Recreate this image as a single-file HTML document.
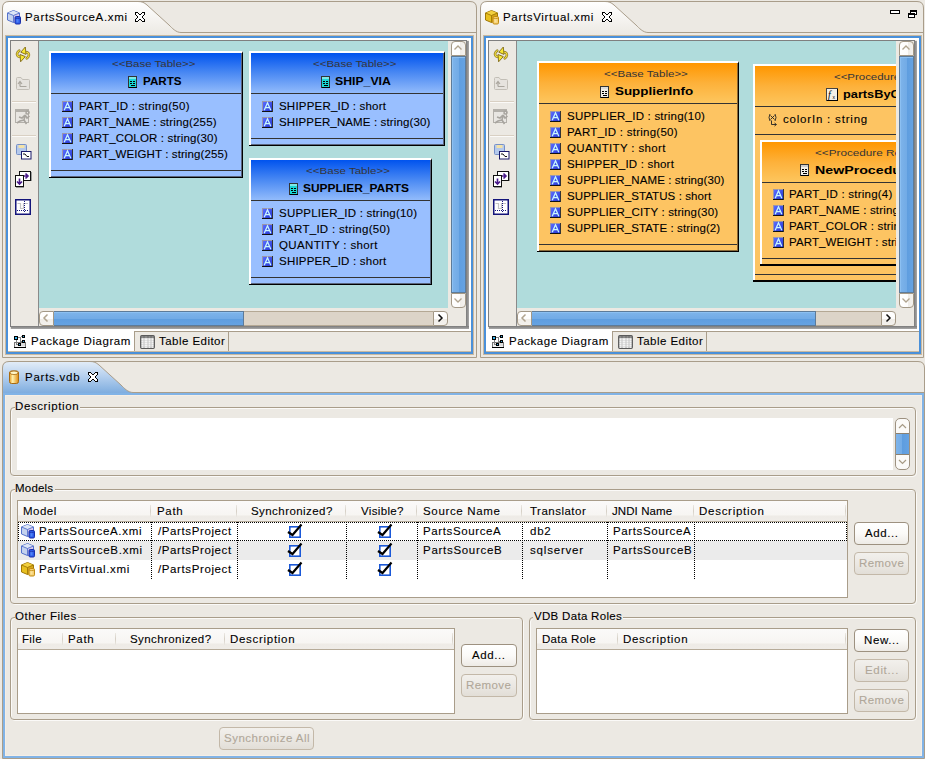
<!DOCTYPE html>
<html><head><meta charset='utf-8'><style>
html,body{margin:0;padding:0;}
body{width:925px;height:759px;overflow:hidden;position:relative;background:#ece9e3;font-family:"Liberation Sans", sans-serif;}
.t{position:absolute;white-space:pre;font-family:"Liberation Sans", sans-serif;}
.s{-webkit-text-stroke:0.1px currentColor;}
.r{position:absolute;box-sizing:border-box;}
svg.r{overflow:visible;}
</style></head><body>
<svg class='r' style='left:0;top:0' width='925' height='362'><defs><linearGradient id='tg2' x1='0' y1='0' x2='0' y2='1'><stop offset='0' stop-color='#ffffff'/><stop offset='1' stop-color='#ece9e3'/></linearGradient></defs><path d='M2.5,34 V8 Q2.5,1.5 9,1.5 H138 C142,1.5 144,2.5 147,5 L169,25 C172,28 176,32.5 181,32.5 V35 H2 Z' fill='url(#tg2)'/><path d='M2.5,357.5 V8 Q2.5,1.5 9,1.5 H470 Q476.5,1.5 476.5,8 V357.5 Z' fill='none' stroke='#a99d8a' stroke-width='1'/><path d='M138,1.5 C142,1.5 144,2.5 147,5 L169,25 C172,28 176,32.5 181,32.5 H476.5' fill='none' stroke='#a99d8a' stroke-width='1'/></svg>
<svg class='r' style='left:0;top:0' width='925' height='362'><defs><linearGradient id='tg480' x1='0' y1='0' x2='0' y2='1'><stop offset='0' stop-color='#ffffff'/><stop offset='1' stop-color='#ece9e3'/></linearGradient></defs><path d='M480.5,34 V8 Q480.5,1.5 487,1.5 H605 C609,1.5 611,2.5 614,5 L636,25 C639,28 643,32.5 648,32.5 V35 H480 Z' fill='url(#tg480)'/><path d='M480.5,357.5 V8 Q480.5,1.5 487,1.5 H917 Q923.5,1.5 923.5,8 V357.5 Z' fill='none' stroke='#a99d8a' stroke-width='1'/><path d='M605,1.5 C609,1.5 611,2.5 614,5 L636,25 C639,28 643,32.5 648,32.5 H923.5' fill='none' stroke='#a99d8a' stroke-width='1'/></svg>
<svg class='r' style='left:6px;top:9px;' width='17' height='17' viewBox='0 0 17 17'><path d='M1.5,4 L7.5,1.5 L13.5,4 V11 L7.5,13.5 L1.5,11 Z' fill='#c4d2ee' stroke='#5572cc' stroke-width='1'/><path d='M2,4 L7.5,1.8 L13,4 L7.5,6.3 Z' fill='#dde6f6'/><path d='M7.5,6.3 L13,4 V11 L7.5,13.2 Z' fill='#d8c8f0'/><path d='M1.5,4 L7.5,6.5 L13.5,4 M7.5,6.5 V13.5' fill='none' stroke='#5572cc' stroke-width='0.9'/><rect x='9' y='7.5' width='5.5' height='7.5' rx='1.2' fill='#2a5ae8' stroke='#1a2ea8' stroke-width='1'/><rect x='10.5' y='9.5' width='2' height='4' fill='#6aa0ff' opacity='0.6'/><path d='M9,9 Q11.75,10.3 14.5,9' fill='none' stroke='#1a2ea8' stroke-width='0.8'/></svg>
<div class='t s' style='left:25.0px;top:12px;font-size:11.5px;line-height:11.5px;font-weight:400;color:#000;letter-spacing:0.667px;'>PartsSourceA.xmi</div>
<svg class='r' style='left:135px;top:11.5px;' width='10' height='10' viewBox='0 0 10 10'><g shape-rendering='crispEdges'><rect x='1' y='1' width='1' height='1' fill='#fff'/><rect x='2' y='1' width='1' height='1' fill='#fff'/><rect x='7' y='1' width='1' height='1' fill='#fff'/><rect x='8' y='1' width='1' height='1' fill='#fff'/><rect x='1' y='2' width='1' height='1' fill='#fff'/><rect x='2' y='2' width='1' height='1' fill='#fff'/><rect x='3' y='2' width='1' height='1' fill='#fff'/><rect x='6' y='2' width='1' height='1' fill='#fff'/><rect x='7' y='2' width='1' height='1' fill='#fff'/><rect x='8' y='2' width='1' height='1' fill='#fff'/><rect x='2' y='3' width='1' height='1' fill='#fff'/><rect x='3' y='3' width='1' height='1' fill='#fff'/><rect x='4' y='3' width='1' height='1' fill='#fff'/><rect x='5' y='3' width='1' height='1' fill='#fff'/><rect x='6' y='3' width='1' height='1' fill='#fff'/><rect x='7' y='3' width='1' height='1' fill='#fff'/><rect x='3' y='4' width='1' height='1' fill='#fff'/><rect x='4' y='4' width='1' height='1' fill='#fff'/><rect x='5' y='4' width='1' height='1' fill='#fff'/><rect x='6' y='4' width='1' height='1' fill='#fff'/><rect x='3' y='5' width='1' height='1' fill='#fff'/><rect x='4' y='5' width='1' height='1' fill='#fff'/><rect x='5' y='5' width='1' height='1' fill='#fff'/><rect x='6' y='5' width='1' height='1' fill='#fff'/><rect x='2' y='6' width='1' height='1' fill='#fff'/><rect x='3' y='6' width='1' height='1' fill='#fff'/><rect x='4' y='6' width='1' height='1' fill='#fff'/><rect x='5' y='6' width='1' height='1' fill='#fff'/><rect x='6' y='6' width='1' height='1' fill='#fff'/><rect x='7' y='6' width='1' height='1' fill='#fff'/><rect x='1' y='7' width='1' height='1' fill='#fff'/><rect x='2' y='7' width='1' height='1' fill='#fff'/><rect x='3' y='7' width='1' height='1' fill='#fff'/><rect x='6' y='7' width='1' height='1' fill='#fff'/><rect x='7' y='7' width='1' height='1' fill='#fff'/><rect x='8' y='7' width='1' height='1' fill='#fff'/><rect x='1' y='8' width='1' height='1' fill='#fff'/><rect x='2' y='8' width='1' height='1' fill='#fff'/><rect x='7' y='8' width='1' height='1' fill='#fff'/><rect x='8' y='8' width='1' height='1' fill='#fff'/><rect x='0' y='0' width='1' height='1' fill='#000'/><rect x='1' y='0' width='1' height='1' fill='#000'/><rect x='2' y='0' width='1' height='1' fill='#000'/><rect x='7' y='0' width='1' height='1' fill='#000'/><rect x='8' y='0' width='1' height='1' fill='#000'/><rect x='9' y='0' width='1' height='1' fill='#000'/><rect x='0' y='1' width='1' height='1' fill='#000'/><rect x='3' y='1' width='1' height='1' fill='#000'/><rect x='6' y='1' width='1' height='1' fill='#000'/><rect x='9' y='1' width='1' height='1' fill='#000'/><rect x='0' y='2' width='1' height='1' fill='#000'/><rect x='4' y='2' width='1' height='1' fill='#000'/><rect x='5' y='2' width='1' height='1' fill='#000'/><rect x='9' y='2' width='1' height='1' fill='#000'/><rect x='1' y='3' width='1' height='1' fill='#000'/><rect x='8' y='3' width='1' height='1' fill='#000'/><rect x='2' y='4' width='1' height='1' fill='#000'/><rect x='7' y='4' width='1' height='1' fill='#000'/><rect x='2' y='5' width='1' height='1' fill='#000'/><rect x='7' y='5' width='1' height='1' fill='#000'/><rect x='1' y='6' width='1' height='1' fill='#000'/><rect x='8' y='6' width='1' height='1' fill='#000'/><rect x='0' y='7' width='1' height='1' fill='#000'/><rect x='4' y='7' width='1' height='1' fill='#000'/><rect x='5' y='7' width='1' height='1' fill='#000'/><rect x='9' y='7' width='1' height='1' fill='#000'/><rect x='0' y='8' width='1' height='1' fill='#000'/><rect x='3' y='8' width='1' height='1' fill='#000'/><rect x='6' y='8' width='1' height='1' fill='#000'/><rect x='9' y='8' width='1' height='1' fill='#000'/><rect x='0' y='9' width='1' height='1' fill='#000'/><rect x='1' y='9' width='1' height='1' fill='#000'/><rect x='2' y='9' width='1' height='1' fill='#000'/><rect x='7' y='9' width='1' height='1' fill='#000'/><rect x='8' y='9' width='1' height='1' fill='#000'/><rect x='9' y='9' width='1' height='1' fill='#000'/></g></svg>
<svg class='r' style='left:484px;top:9px;' width='17' height='17' viewBox='0 0 17 17'><path d='M1.5,4 L7.5,1.5 L13.5,4 V11 L7.5,13.5 L1.5,11 Z' fill='#e8c020' stroke='#a07808' stroke-width='1'/><path d='M2,4 L7.5,1.8 L13,4 L7.5,6.3 Z' fill='#f2d040'/><path d='M7.5,6.3 L13,4 V11 L7.5,13.2 Z' fill='#d8a818'/><path d='M1.5,4 L7.5,6.5 L13.5,4 M7.5,6.5 V13.5' fill='none' stroke='#a07808' stroke-width='0.9'/><rect x='9' y='7.5' width='5.5' height='7.5' rx='1.2' fill='#f6cf70' stroke='#c08a10' stroke-width='1'/><rect x='10.5' y='9.5' width='2' height='4' fill='#fff0b8' opacity='0.6'/><path d='M9,9 Q11.75,10.3 14.5,9' fill='none' stroke='#c08a10' stroke-width='0.8'/></svg>
<div class='t s' style='left:503.0px;top:12px;font-size:11.5px;line-height:11.5px;font-weight:400;color:#000;letter-spacing:0.667px;'>PartsVirtual.xmi</div>
<svg class='r' style='left:602px;top:11.5px;' width='10' height='10' viewBox='0 0 10 10'><g shape-rendering='crispEdges'><rect x='1' y='1' width='1' height='1' fill='#fff'/><rect x='2' y='1' width='1' height='1' fill='#fff'/><rect x='7' y='1' width='1' height='1' fill='#fff'/><rect x='8' y='1' width='1' height='1' fill='#fff'/><rect x='1' y='2' width='1' height='1' fill='#fff'/><rect x='2' y='2' width='1' height='1' fill='#fff'/><rect x='3' y='2' width='1' height='1' fill='#fff'/><rect x='6' y='2' width='1' height='1' fill='#fff'/><rect x='7' y='2' width='1' height='1' fill='#fff'/><rect x='8' y='2' width='1' height='1' fill='#fff'/><rect x='2' y='3' width='1' height='1' fill='#fff'/><rect x='3' y='3' width='1' height='1' fill='#fff'/><rect x='4' y='3' width='1' height='1' fill='#fff'/><rect x='5' y='3' width='1' height='1' fill='#fff'/><rect x='6' y='3' width='1' height='1' fill='#fff'/><rect x='7' y='3' width='1' height='1' fill='#fff'/><rect x='3' y='4' width='1' height='1' fill='#fff'/><rect x='4' y='4' width='1' height='1' fill='#fff'/><rect x='5' y='4' width='1' height='1' fill='#fff'/><rect x='6' y='4' width='1' height='1' fill='#fff'/><rect x='3' y='5' width='1' height='1' fill='#fff'/><rect x='4' y='5' width='1' height='1' fill='#fff'/><rect x='5' y='5' width='1' height='1' fill='#fff'/><rect x='6' y='5' width='1' height='1' fill='#fff'/><rect x='2' y='6' width='1' height='1' fill='#fff'/><rect x='3' y='6' width='1' height='1' fill='#fff'/><rect x='4' y='6' width='1' height='1' fill='#fff'/><rect x='5' y='6' width='1' height='1' fill='#fff'/><rect x='6' y='6' width='1' height='1' fill='#fff'/><rect x='7' y='6' width='1' height='1' fill='#fff'/><rect x='1' y='7' width='1' height='1' fill='#fff'/><rect x='2' y='7' width='1' height='1' fill='#fff'/><rect x='3' y='7' width='1' height='1' fill='#fff'/><rect x='6' y='7' width='1' height='1' fill='#fff'/><rect x='7' y='7' width='1' height='1' fill='#fff'/><rect x='8' y='7' width='1' height='1' fill='#fff'/><rect x='1' y='8' width='1' height='1' fill='#fff'/><rect x='2' y='8' width='1' height='1' fill='#fff'/><rect x='7' y='8' width='1' height='1' fill='#fff'/><rect x='8' y='8' width='1' height='1' fill='#fff'/><rect x='0' y='0' width='1' height='1' fill='#000'/><rect x='1' y='0' width='1' height='1' fill='#000'/><rect x='2' y='0' width='1' height='1' fill='#000'/><rect x='7' y='0' width='1' height='1' fill='#000'/><rect x='8' y='0' width='1' height='1' fill='#000'/><rect x='9' y='0' width='1' height='1' fill='#000'/><rect x='0' y='1' width='1' height='1' fill='#000'/><rect x='3' y='1' width='1' height='1' fill='#000'/><rect x='6' y='1' width='1' height='1' fill='#000'/><rect x='9' y='1' width='1' height='1' fill='#000'/><rect x='0' y='2' width='1' height='1' fill='#000'/><rect x='4' y='2' width='1' height='1' fill='#000'/><rect x='5' y='2' width='1' height='1' fill='#000'/><rect x='9' y='2' width='1' height='1' fill='#000'/><rect x='1' y='3' width='1' height='1' fill='#000'/><rect x='8' y='3' width='1' height='1' fill='#000'/><rect x='2' y='4' width='1' height='1' fill='#000'/><rect x='7' y='4' width='1' height='1' fill='#000'/><rect x='2' y='5' width='1' height='1' fill='#000'/><rect x='7' y='5' width='1' height='1' fill='#000'/><rect x='1' y='6' width='1' height='1' fill='#000'/><rect x='8' y='6' width='1' height='1' fill='#000'/><rect x='0' y='7' width='1' height='1' fill='#000'/><rect x='4' y='7' width='1' height='1' fill='#000'/><rect x='5' y='7' width='1' height='1' fill='#000'/><rect x='9' y='7' width='1' height='1' fill='#000'/><rect x='0' y='8' width='1' height='1' fill='#000'/><rect x='3' y='8' width='1' height='1' fill='#000'/><rect x='6' y='8' width='1' height='1' fill='#000'/><rect x='9' y='8' width='1' height='1' fill='#000'/><rect x='0' y='9' width='1' height='1' fill='#000'/><rect x='1' y='9' width='1' height='1' fill='#000'/><rect x='2' y='9' width='1' height='1' fill='#000'/><rect x='7' y='9' width='1' height='1' fill='#000'/><rect x='8' y='9' width='1' height='1' fill='#000'/><rect x='9' y='9' width='1' height='1' fill='#000'/></g></svg>
<div class='r' style='left:890px;top:10px;width:10px;height:4px;border:1px solid #000;background:#fff'></div>
<div class='r' style='left:910px;top:10px;width:7px;height:5px;border:1px solid #000;border-top-width:2px;background:#fff'></div>
<div class='r' style='left:908px;top:13px;width:7px;height:5px;border:1px solid #000;border-top-width:2px;background:#fff'></div>
<div class='r' style='left:5px;top:35px;width:469px;height:320px;border:1px solid #c9b9a0'></div>
<div class='r' style='left:6px;top:36px;width:467px;height:318px;border:2px solid #4a90d9;background:#fff'></div>
<div class='r' style='left:483px;top:35px;width:439px;height:320px;border:1px solid #c9b9a0'></div>
<div class='r' style='left:484px;top:36px;width:437px;height:318px;border:2px solid #4a90d9;background:#fff'></div>
<div class='r' style='left:10px;top:40px;width:459px;height:289px;background:#ece9e3'></div>
<div class='r' style='left:466px;top:41px;width:3px;height:288px;background:linear-gradient(90deg,#7a7a7a,#a8a8a8)'></div>
<div class='r' style='left:11px;top:326px;width:458px;height:3px;background:linear-gradient(180deg,#7a7a7a,#a8a8a8)'></div>
<div class='r' style='left:10px;top:40px;width:457px;height:1px;background:#7f7f7f'></div>
<div class='r' style='left:10px;top:40px;width:1px;height:287px;background:#7f7f7f'></div>
<div class='r' style='left:38px;top:41px;width:1px;height:285px;background:#8a8a8a'></div>
<div class='r' style='left:39px;top:41px;width:409px;height:267px;background:#b0dcdc'></div>
<div class='r' style='left:451px;top:41px;width:15px;height:15px;border:1px solid #a39886;background:linear-gradient(90deg,#fff 0,#fdfcfb 60%,#efece7 60%,#f4f2ee 100%);border-radius:4px 4px 0 0'></div>
<svg class='r' style='left:451px;top:41px;' width='15' height='15' viewBox='0 0 15 15'><path d='M3.5,8.5 L7,5 L10.5,8.5' fill='none' stroke='#b0a48f' stroke-width='1.3'/></svg>
<div class='r' style='left:451px;top:56px;width:15px;height:237px;background:linear-gradient(90deg,#7eb4ea 0,#72abe6 50%,#5e9ddf 50%,#65a2e2 100%);border:1px solid #5d7b99;box-shadow:inset 1px 1px 0 #8cc0f2'></div>
<div class='r' style='left:451px;top:293px;width:15px;height:15px;border:1px solid #a39886;background:linear-gradient(90deg,#fff 0,#fdfcfb 60%,#efece7 60%,#f4f2ee 100%);border-radius:0 0 4px 4px'></div>
<svg class='r' style='left:451px;top:293px;' width='15' height='15' viewBox='0 0 15 15'><path d='M3.5,5.5 L7,9 L10.5,5.5' fill='none' stroke='#b0a48f' stroke-width='1.3'/></svg>
<div class='r' style='left:39px;top:311px;width:15px;height:15px;border:1px solid #a39886;background:linear-gradient(180deg,#fff 0,#fdfcfb 55%,#efece7 55%,#f4f2ee 100%);border-radius:4px 0 0 4px'></div>
<svg class='r' style='left:39px;top:311px;' width='15' height='15' viewBox='0 0 15 15'><path d='M8.5,3.5 L5,7 L8.5,10.5' fill='none' stroke='#b0a48f' stroke-width='1.5'/></svg>
<div class='r' style='left:54px;top:311px;width:190px;height:15px;background:linear-gradient(180deg,#7eb4ea 0,#72abe6 50%,#5e9ddf 50%,#65a2e2 100%);border:1px solid #5d7b99;border-left:none;box-shadow:inset 0 1px 0 #8cc0f2'></div>
<div class='r' style='left:244px;top:311px;width:189px;height:15px;background:#dcd4c8;border-top:1px solid #b4a894;border-bottom:1px solid #b4a894'></div>
<div class='r' style='left:433px;top:311px;width:15px;height:15px;border:1px solid #a39886;background:linear-gradient(180deg,#fff 0,#fdfcfb 55%,#efece7 55%,#f4f2ee 100%);border-radius:0 4px 4px 0'></div>
<svg class='r' style='left:433px;top:311px;' width='15' height='15' viewBox='0 0 15 15'><path d='M5.5,3.5 L9,7 L5.5,10.5' fill='none' stroke='#111' stroke-width='1.5'/></svg>
<div class='r' style='left:488px;top:40px;width:429px;height:289px;background:#ece9e3'></div>
<div class='r' style='left:914px;top:41px;width:3px;height:288px;background:linear-gradient(90deg,#7a7a7a,#a8a8a8)'></div>
<div class='r' style='left:489px;top:326px;width:428px;height:3px;background:linear-gradient(180deg,#7a7a7a,#a8a8a8)'></div>
<div class='r' style='left:488px;top:40px;width:427px;height:1px;background:#7f7f7f'></div>
<div class='r' style='left:488px;top:40px;width:1px;height:287px;background:#7f7f7f'></div>
<div class='r' style='left:516px;top:41px;width:1px;height:285px;background:#8a8a8a'></div>
<div class='r' style='left:517px;top:41px;width:379px;height:267px;background:#b0dcdc'></div>
<div class='r' style='left:899px;top:41px;width:15px;height:15px;border:1px solid #a39886;background:linear-gradient(90deg,#fff 0,#fdfcfb 60%,#efece7 60%,#f4f2ee 100%);border-radius:4px 4px 0 0'></div>
<svg class='r' style='left:899px;top:41px;' width='15' height='15' viewBox='0 0 15 15'><path d='M3.5,8.5 L7,5 L10.5,8.5' fill='none' stroke='#b0a48f' stroke-width='1.3'/></svg>
<div class='r' style='left:899px;top:56px;width:15px;height:237px;background:linear-gradient(90deg,#7eb4ea 0,#72abe6 50%,#5e9ddf 50%,#65a2e2 100%);border:1px solid #5d7b99;box-shadow:inset 1px 1px 0 #8cc0f2'></div>
<div class='r' style='left:899px;top:293px;width:15px;height:15px;border:1px solid #a39886;background:linear-gradient(90deg,#fff 0,#fdfcfb 60%,#efece7 60%,#f4f2ee 100%);border-radius:0 0 4px 4px'></div>
<svg class='r' style='left:899px;top:293px;' width='15' height='15' viewBox='0 0 15 15'><path d='M3.5,5.5 L7,9 L10.5,5.5' fill='none' stroke='#b0a48f' stroke-width='1.3'/></svg>
<div class='r' style='left:517px;top:311px;width:15px;height:15px;border:1px solid #a39886;background:linear-gradient(180deg,#fff 0,#fdfcfb 55%,#efece7 55%,#f4f2ee 100%);border-radius:4px 0 0 4px'></div>
<svg class='r' style='left:517px;top:311px;' width='15' height='15' viewBox='0 0 15 15'><path d='M8.5,3.5 L5,7 L8.5,10.5' fill='none' stroke='#b0a48f' stroke-width='1.5'/></svg>
<div class='r' style='left:532px;top:311px;width:284px;height:15px;background:linear-gradient(180deg,#7eb4ea 0,#72abe6 50%,#5e9ddf 50%,#65a2e2 100%);border:1px solid #5d7b99;border-left:none;box-shadow:inset 0 1px 0 #8cc0f2'></div>
<div class='r' style='left:816px;top:311px;width:65px;height:15px;background:#dcd4c8;border-top:1px solid #b4a894;border-bottom:1px solid #b4a894'></div>
<div class='r' style='left:881px;top:311px;width:15px;height:15px;border:1px solid #a39886;background:linear-gradient(180deg,#fff 0,#fdfcfb 55%,#efece7 55%,#f4f2ee 100%);border-radius:0 4px 4px 0'></div>
<svg class='r' style='left:881px;top:311px;' width='15' height='15' viewBox='0 0 15 15'><path d='M5.5,3.5 L9,7 L5.5,10.5' fill='none' stroke='#111' stroke-width='1.5'/></svg>
<div class='r' style='left:8px;top:331px;width:463px;height:1px;background:#a99d8a'></div>
<div class='r' style='left:8px;top:332px;width:463px;height:19px;background:#ece9e3'></div>
<div class='r' style='left:8px;top:351px;width:463px;height:1px;background:#c9b9a0'></div>
<div class='r' style='left:8px;top:329px;width:126px;height:22px;background:#fff'></div>
<div class='r' style='left:134px;top:331px;width:1px;height:20px;background:#a99d8a'></div>
<div class='r' style='left:228px;top:331px;width:1px;height:20px;background:#a99d8a'></div>
<svg class='r' style='left:12px;top:333px;' width='16' height='16' viewBox='0 0 16 16'><g shape-rendering='crispEdges'><path d='M2.5,14.5 V9.5 H13.5 V14.5 Z' fill='#f2f2f2' stroke='#777'/><rect x='2' y='14' width='12' height='1' fill='#000'/><rect x='9' y='10' width='4' height='3' fill='#ddd'/><path d='M6,4.5 H8.5 V8.5 H10 M8.5,3.5 H10 M4.5,7 V11.5 H6' fill='none' stroke='#808080'/><rect x='2' y='3' width='4' height='4' fill='#000'/><rect x='3' y='4' width='2' height='2' fill='#38b0e8'/><rect x='10' y='2' width='3' height='3' fill='#000'/><rect x='11' y='3' width='1' height='1' fill='#38a8e0'/><rect x='10' y='7' width='3' height='3' fill='#000'/><rect x='11' y='8' width='1' height='1' fill='#38a8e0'/><rect x='6' y='10' width='3' height='3' fill='#000'/><rect x='7' y='11' width='1' height='1' fill='#38a8e0'/></g></svg>
<div class='t s' style='left:31.0px;top:336px;font-size:11.5px;line-height:11.5px;font-weight:400;color:#000;letter-spacing:0.571px;'>Package Diagram</div>
<svg class='r' style='left:140px;top:335px;' width='15' height='14' viewBox='0 0 15 14'><rect x='0.7' y='0.7' width='13.6' height='12.6' rx='1' fill='#c4c4c4' stroke='#5a5a5a' stroke-width='1.3'/><rect x='1' y='1' width='13' height='2' fill='#6a6a6a'/><rect x='1.5' y='1.5' width='2' height='1' fill='#aaa'/><rect x='1.5' y='3.5' width='2' height='1.3' fill='#fff'/><rect x='1.5' y='5.5' width='2' height='1.3' fill='#fff'/><rect x='1.5' y='7.5' width='2' height='1.3' fill='#fff'/><rect x='1.5' y='9.5' width='2' height='1.3' fill='#fff'/><rect x='1.5' y='11.5' width='2' height='1.3' fill='#fff'/><rect x='4.5' y='1.5' width='3' height='1' fill='#aaa'/><rect x='4.5' y='3.5' width='3' height='1.3' fill='#fff'/><rect x='4.5' y='5.5' width='3' height='1.3' fill='#fff'/><rect x='4.5' y='7.5' width='3' height='1.3' fill='#fff'/><rect x='4.5' y='9.5' width='3' height='1.3' fill='#fff'/><rect x='4.5' y='11.5' width='3' height='1.3' fill='#fff'/><rect x='8.5' y='1.5' width='2' height='1' fill='#aaa'/><rect x='8.5' y='3.5' width='2' height='1.3' fill='#fff'/><rect x='8.5' y='5.5' width='2' height='1.3' fill='#fff'/><rect x='8.5' y='7.5' width='2' height='1.3' fill='#fff'/><rect x='8.5' y='9.5' width='2' height='1.3' fill='#fff'/><rect x='8.5' y='11.5' width='2' height='1.3' fill='#fff'/><rect x='11.5' y='1.5' width='2' height='1' fill='#aaa'/><rect x='11.5' y='3.5' width='2' height='1.3' fill='#fff'/><rect x='11.5' y='5.5' width='2' height='1.3' fill='#fff'/><rect x='11.5' y='7.5' width='2' height='1.3' fill='#fff'/><rect x='11.5' y='9.5' width='2' height='1.3' fill='#fff'/><rect x='11.5' y='11.5' width='2' height='1.3' fill='#fff'/></svg>
<div class='t s' style='left:159.0px;top:336px;font-size:11.5px;line-height:11.5px;font-weight:400;color:#000;letter-spacing:0.455px;'>Table Editor</div>
<div class='r' style='left:486px;top:331px;width:433px;height:1px;background:#a99d8a'></div>
<div class='r' style='left:486px;top:332px;width:433px;height:19px;background:#ece9e3'></div>
<div class='r' style='left:486px;top:351px;width:433px;height:1px;background:#c9b9a0'></div>
<div class='r' style='left:486px;top:329px;width:126px;height:22px;background:#fff'></div>
<div class='r' style='left:612px;top:331px;width:1px;height:20px;background:#a99d8a'></div>
<div class='r' style='left:706px;top:331px;width:1px;height:20px;background:#a99d8a'></div>
<svg class='r' style='left:490px;top:333px;' width='16' height='16' viewBox='0 0 16 16'><g shape-rendering='crispEdges'><path d='M2.5,14.5 V9.5 H13.5 V14.5 Z' fill='#f2f2f2' stroke='#777'/><rect x='2' y='14' width='12' height='1' fill='#000'/><rect x='9' y='10' width='4' height='3' fill='#ddd'/><path d='M6,4.5 H8.5 V8.5 H10 M8.5,3.5 H10 M4.5,7 V11.5 H6' fill='none' stroke='#808080'/><rect x='2' y='3' width='4' height='4' fill='#000'/><rect x='3' y='4' width='2' height='2' fill='#38b0e8'/><rect x='10' y='2' width='3' height='3' fill='#000'/><rect x='11' y='3' width='1' height='1' fill='#38a8e0'/><rect x='10' y='7' width='3' height='3' fill='#000'/><rect x='11' y='8' width='1' height='1' fill='#38a8e0'/><rect x='6' y='10' width='3' height='3' fill='#000'/><rect x='7' y='11' width='1' height='1' fill='#38a8e0'/></g></svg>
<div class='t s' style='left:509.0px;top:336px;font-size:11.5px;line-height:11.5px;font-weight:400;color:#000;letter-spacing:0.571px;'>Package Diagram</div>
<svg class='r' style='left:618px;top:335px;' width='15' height='14' viewBox='0 0 15 14'><rect x='0.7' y='0.7' width='13.6' height='12.6' rx='1' fill='#c4c4c4' stroke='#5a5a5a' stroke-width='1.3'/><rect x='1' y='1' width='13' height='2' fill='#6a6a6a'/><rect x='1.5' y='1.5' width='2' height='1' fill='#aaa'/><rect x='1.5' y='3.5' width='2' height='1.3' fill='#fff'/><rect x='1.5' y='5.5' width='2' height='1.3' fill='#fff'/><rect x='1.5' y='7.5' width='2' height='1.3' fill='#fff'/><rect x='1.5' y='9.5' width='2' height='1.3' fill='#fff'/><rect x='1.5' y='11.5' width='2' height='1.3' fill='#fff'/><rect x='4.5' y='1.5' width='3' height='1' fill='#aaa'/><rect x='4.5' y='3.5' width='3' height='1.3' fill='#fff'/><rect x='4.5' y='5.5' width='3' height='1.3' fill='#fff'/><rect x='4.5' y='7.5' width='3' height='1.3' fill='#fff'/><rect x='4.5' y='9.5' width='3' height='1.3' fill='#fff'/><rect x='4.5' y='11.5' width='3' height='1.3' fill='#fff'/><rect x='8.5' y='1.5' width='2' height='1' fill='#aaa'/><rect x='8.5' y='3.5' width='2' height='1.3' fill='#fff'/><rect x='8.5' y='5.5' width='2' height='1.3' fill='#fff'/><rect x='8.5' y='7.5' width='2' height='1.3' fill='#fff'/><rect x='8.5' y='9.5' width='2' height='1.3' fill='#fff'/><rect x='8.5' y='11.5' width='2' height='1.3' fill='#fff'/><rect x='11.5' y='1.5' width='2' height='1' fill='#aaa'/><rect x='11.5' y='3.5' width='2' height='1.3' fill='#fff'/><rect x='11.5' y='5.5' width='2' height='1.3' fill='#fff'/><rect x='11.5' y='7.5' width='2' height='1.3' fill='#fff'/><rect x='11.5' y='9.5' width='2' height='1.3' fill='#fff'/><rect x='11.5' y='11.5' width='2' height='1.3' fill='#fff'/></svg>
<div class='t s' style='left:637.0px;top:336px;font-size:11.5px;line-height:11.5px;font-weight:400;color:#000;letter-spacing:0.455px;'>Table Editor</div>
<svg class='r' style='left:15px;top:46px;' width='16' height='17' viewBox='0 0 16 17'><g fill='none' stroke-linecap='round'><path d='M9.5,6.2 C13.5,5.5 15,8.5 13.2,11 L11.8,12.3' stroke='#8f7a22' stroke-width='2.6'/><path d='M6.5,10.8 C2.5,11.5 1,8.5 2.8,6 L4.2,4.7' stroke='#8f7a22' stroke-width='2.6'/><path d='M9.5,6.2 C13.5,5.5 15,8.5 13.2,11 L11.8,12.3' stroke='#f4e040' stroke-width='1.1'/><path d='M6.5,10.8 C2.5,11.5 1,8.5 2.8,6 L4.2,4.7' stroke='#f4e040' stroke-width='1.1'/></g><path d='M10.3,1 L5.8,6.2 L11,8.4 Z' fill='#f8e830' stroke='#806a18' stroke-width='0.9'/><path d='M5.6,15.8 L10.3,10.6 L5,8.5 Z' fill='#f8e830' stroke='#806a18' stroke-width='0.9'/></svg>
<svg class='r' style='left:16px;top:77px;' width='14' height='13' viewBox='0 0 14 13'><path d='M0.5,3.5 V1.5 Q0.5,0.5 1.5,0.5 H5 L6.5,2.5 H12.5 Q13.5,2.5 13.5,3.5 V11.5 Q13.5,12.5 12.5,12.5 H1.5 Q0.5,12.5 0.5,11.5 Z' fill='#e6e3de' stroke='#c2beb6'/><path d='M4,9.5 V5 M2,7 L4,4.5 L6,7 M4,9.5 H10.5' fill='none' stroke='#aaa69e' stroke-width='1.2'/></svg>
<div class='r' style='left:12px;top:101px;width:24px;height:1px;background:#d9d0c3'></div>
<div class='r' style='left:12px;top:102px;width:24px;height:1px;background:#fbfaf8'></div>
<svg class='r' style='left:15px;top:109px;' width='16' height='16' viewBox='0 0 16 16'><rect x='0.5' y='0.5' width='13' height='13' fill='#e8e6e2' stroke='#b3b0aa'/><rect x='1' y='1' width='12' height='2' fill='#b3b0aa'/><path d='M11,3.5 A1.5,1.5 0 1 1 11,3.6 M10,6 L7,9 L4,8 M10,6 L12,9 L14.5,7 M10,6 L9,11 L11.5,15 M9,11 L5,12 L2,14' fill='none' stroke='#a8a59f' stroke-width='1.6'/></svg>
<div class='r' style='left:12px;top:135px;width:24px;height:1px;background:#d9d0c3'></div>
<div class='r' style='left:12px;top:136px;width:24px;height:1px;background:#fbfaf8'></div>
<svg class='r' style='left:16px;top:144px;' width='16' height='16' viewBox='0 0 16 16'><rect x='0.5' y='0.5' width='10' height='10' rx='1' fill='#b4c9ec' stroke='#7590c8'/><rect x='2.5' y='1' width='6' height='3' fill='#f3e2a8'/><rect x='5.5' y='7.5' width='9.5' height='7.5' fill='#fff' stroke='#1a1a6a'/><path d='M7,10 H9 L11,12.5 H13' fill='none' stroke='#111' stroke-width='1'/></svg>
<svg class='r' style='left:15px;top:171px;' width='17' height='17' viewBox='0 0 17 17'><rect x='4.5' y='0.5' width='11' height='9' fill='#fff' stroke='#111'/><rect x='16' y='1' width='1' height='9' fill='#999'/><path d='M7.5,5 H12.5 M10.5,2.5 L13,5 L10.5,7.5' fill='none' stroke='#4a1a8a' stroke-width='1.6'/><rect x='0.5' y='4.5' width='8' height='11' fill='#fff' stroke='#111'/><rect x='1' y='16' width='8' height='1' fill='#999'/><path d='M4.5,7.5 V12.5 M2,10.5 L4.5,13 L7,10.5' fill='none' stroke='#4a1a8a' stroke-width='1.6'/></svg>
<svg class='r' style='left:15px;top:199px;' width='16' height='16' viewBox='0 0 16 16'><rect x='0.75' y='0.75' width='14.5' height='14.5' fill='#fff' stroke='#14147a' stroke-width='1.5'/><path d='M2.5,4.5 H5.5 V9.5 H8.5 V4.5 H13' fill='none' stroke='#c4c4c4' stroke-width='1.2'/><path d='M9.5,2 V14 M2,11.5 H14' fill='none' stroke='#14147a' stroke-width='1' stroke-dasharray='1,1'/></svg>
<svg class='r' style='left:493px;top:46px;' width='16' height='17' viewBox='0 0 16 17'><g fill='none' stroke-linecap='round'><path d='M9.5,6.2 C13.5,5.5 15,8.5 13.2,11 L11.8,12.3' stroke='#8f7a22' stroke-width='2.6'/><path d='M6.5,10.8 C2.5,11.5 1,8.5 2.8,6 L4.2,4.7' stroke='#8f7a22' stroke-width='2.6'/><path d='M9.5,6.2 C13.5,5.5 15,8.5 13.2,11 L11.8,12.3' stroke='#f4e040' stroke-width='1.1'/><path d='M6.5,10.8 C2.5,11.5 1,8.5 2.8,6 L4.2,4.7' stroke='#f4e040' stroke-width='1.1'/></g><path d='M10.3,1 L5.8,6.2 L11,8.4 Z' fill='#f8e830' stroke='#806a18' stroke-width='0.9'/><path d='M5.6,15.8 L10.3,10.6 L5,8.5 Z' fill='#f8e830' stroke='#806a18' stroke-width='0.9'/></svg>
<svg class='r' style='left:494px;top:77px;' width='14' height='13' viewBox='0 0 14 13'><path d='M0.5,3.5 V1.5 Q0.5,0.5 1.5,0.5 H5 L6.5,2.5 H12.5 Q13.5,2.5 13.5,3.5 V11.5 Q13.5,12.5 12.5,12.5 H1.5 Q0.5,12.5 0.5,11.5 Z' fill='#e6e3de' stroke='#c2beb6'/><path d='M4,9.5 V5 M2,7 L4,4.5 L6,7 M4,9.5 H10.5' fill='none' stroke='#aaa69e' stroke-width='1.2'/></svg>
<div class='r' style='left:490px;top:101px;width:24px;height:1px;background:#d9d0c3'></div>
<div class='r' style='left:490px;top:102px;width:24px;height:1px;background:#fbfaf8'></div>
<svg class='r' style='left:493px;top:109px;' width='16' height='16' viewBox='0 0 16 16'><rect x='0.5' y='0.5' width='13' height='13' fill='#e8e6e2' stroke='#b3b0aa'/><rect x='1' y='1' width='12' height='2' fill='#b3b0aa'/><path d='M11,3.5 A1.5,1.5 0 1 1 11,3.6 M10,6 L7,9 L4,8 M10,6 L12,9 L14.5,7 M10,6 L9,11 L11.5,15 M9,11 L5,12 L2,14' fill='none' stroke='#a8a59f' stroke-width='1.6'/></svg>
<div class='r' style='left:490px;top:135px;width:24px;height:1px;background:#d9d0c3'></div>
<div class='r' style='left:490px;top:136px;width:24px;height:1px;background:#fbfaf8'></div>
<svg class='r' style='left:494px;top:144px;' width='16' height='16' viewBox='0 0 16 16'><rect x='0.5' y='0.5' width='10' height='10' rx='1' fill='#b4c9ec' stroke='#7590c8'/><rect x='2.5' y='1' width='6' height='3' fill='#f3e2a8'/><rect x='5.5' y='7.5' width='9.5' height='7.5' fill='#fff' stroke='#1a1a6a'/><path d='M7,10 H9 L11,12.5 H13' fill='none' stroke='#111' stroke-width='1'/></svg>
<svg class='r' style='left:493px;top:171px;' width='17' height='17' viewBox='0 0 17 17'><rect x='4.5' y='0.5' width='11' height='9' fill='#fff' stroke='#111'/><rect x='16' y='1' width='1' height='9' fill='#999'/><path d='M7.5,5 H12.5 M10.5,2.5 L13,5 L10.5,7.5' fill='none' stroke='#4a1a8a' stroke-width='1.6'/><rect x='0.5' y='4.5' width='8' height='11' fill='#fff' stroke='#111'/><rect x='1' y='16' width='8' height='1' fill='#999'/><path d='M4.5,7.5 V12.5 M2,10.5 L4.5,13 L7,10.5' fill='none' stroke='#4a1a8a' stroke-width='1.6'/></svg>
<svg class='r' style='left:493px;top:199px;' width='16' height='16' viewBox='0 0 16 16'><rect x='0.75' y='0.75' width='14.5' height='14.5' fill='#fff' stroke='#14147a' stroke-width='1.5'/><path d='M2.5,4.5 H5.5 V9.5 H8.5 V4.5 H13' fill='none' stroke='#c4c4c4' stroke-width='1.2'/><path d='M9.5,2 V14 M2,11.5 H14' fill='none' stroke='#14147a' stroke-width='1' stroke-dasharray='1,1'/></svg>
<div class='r' style='left:49px;top:51px;width:194px;height:127px;background:#99bfff;border-left:2px solid #fff;border-top:2px solid #fff;border-right:1px solid #000;border-bottom:1px solid #000'></div>
<div class='r' style='left:241px;top:53px;width:1px;height:124px;background:rgba(40,30,20,0.55)'></div>
<div class='r' style='left:51px;top:176px;width:190px;height:1px;background:rgba(40,30,20,0.55)'></div>
<div class='r' style='left:49px;top:177px;width:194px;height:1px;background:#000'></div>
<div class='r' style='left:51px;top:53px;width:190px;height:40px;background:linear-gradient(180deg,#0053ee 0%,#4a89f3 50%,#92bbfb 100%)'></div>
<div class='r' style='left:51px;top:93px;width:190px;height:1px;background:#333'></div>
<div class='r' style='left:51px;top:170px;width:190px;height:1px;background:#333'></div>
<div class='t' style='left:112.29px;top:59px;font-size:9.5px;line-height:9.5px;font-weight:400;color:#343438;letter-spacing:0px;transform:scaleX(1.2090);transform-origin:0 0;'>&lt;&lt;Base Table&gt;&gt;</div>
<svg class='r' style='left:128px;top:76px;' width='9' height='12' viewBox='0 0 9 12'><rect x='0.5' y='0.5' width='8' height='11' fill='#19d6d6' stroke='#333'/><rect x='1' y='1' width='7' height='2' fill='#7de8e8'/><rect x='1' y='11' width='8' height='1' fill='#000'/><rect x='2' y='5' width='2' height='1' fill='#000'/><rect x='5' y='5' width='2' height='1' fill='#000'/><rect x='2' y='7' width='2' height='1' fill='#000'/><rect x='5' y='7' width='2' height='1' fill='#000'/><rect x='3' y='9' width='4' height='1' fill='#000'/></svg>
<div class='t' style='left:142.94px;top:76px;font-size:11px;line-height:11px;font-weight:700;color:#000;letter-spacing:0px;transform:scaleX(1.0571);transform-origin:0 0;'>PARTS</div>
<svg class='r' style='left:62px;top:101px;' width='11' height='11' viewBox='0 0 11 11'><rect x='0' y='0' width='11' height='11' fill='#9a96aa'/><rect x='0' y='10' width='11' height='1' fill='#111'/><rect x='10' y='0' width='1' height='11' fill='#333'/><defs><linearGradient id='ag' x1='0' y1='0' x2='1' y2='1'><stop offset='0' stop-color='#5a6cff'/><stop offset='1' stop-color='#2436d0'/></linearGradient></defs><rect x='1' y='1' width='9' height='9' fill='url(#ag)'/><path d='M2.2,9.2 L5.5,1.8 L8.8,9.2 M3.6,6.6 H7.4' stroke='#c8f6ff' stroke-width='1.3' fill='none'/></svg>
<div class='t s' style='left:79.0px;top:101px;font-size:11.5px;line-height:11.5px;font-weight:400;color:#000;letter-spacing:0.253px;'>PART_ID : string(50)</div>
<svg class='r' style='left:62px;top:117px;' width='11' height='11' viewBox='0 0 11 11'><rect x='0' y='0' width='11' height='11' fill='#9a96aa'/><rect x='0' y='10' width='11' height='1' fill='#111'/><rect x='10' y='0' width='1' height='11' fill='#333'/><defs><linearGradient id='ag' x1='0' y1='0' x2='1' y2='1'><stop offset='0' stop-color='#5a6cff'/><stop offset='1' stop-color='#2436d0'/></linearGradient></defs><rect x='1' y='1' width='9' height='9' fill='url(#ag)'/><path d='M2.2,9.2 L5.5,1.8 L8.8,9.2 M3.6,6.6 H7.4' stroke='#c8f6ff' stroke-width='1.3' fill='none'/></svg>
<div class='t s' style='left:79.0px;top:117px;font-size:11.5px;line-height:11.5px;font-weight:400;color:#000;letter-spacing:0.173px;'>PART_NAME : string(255)</div>
<svg class='r' style='left:62px;top:133px;' width='11' height='11' viewBox='0 0 11 11'><rect x='0' y='0' width='11' height='11' fill='#9a96aa'/><rect x='0' y='10' width='11' height='1' fill='#111'/><rect x='10' y='0' width='1' height='11' fill='#333'/><defs><linearGradient id='ag' x1='0' y1='0' x2='1' y2='1'><stop offset='0' stop-color='#5a6cff'/><stop offset='1' stop-color='#2436d0'/></linearGradient></defs><rect x='1' y='1' width='9' height='9' fill='url(#ag)'/><path d='M2.2,9.2 L5.5,1.8 L8.8,9.2 M3.6,6.6 H7.4' stroke='#c8f6ff' stroke-width='1.3' fill='none'/></svg>
<div class='t s' style='left:79.0px;top:133px;font-size:11.5px;line-height:11.5px;font-weight:400;color:#000;letter-spacing:0.155px;'>PART_COLOR : string(30)</div>
<svg class='r' style='left:62px;top:149px;' width='11' height='11' viewBox='0 0 11 11'><rect x='0' y='0' width='11' height='11' fill='#9a96aa'/><rect x='0' y='10' width='11' height='1' fill='#111'/><rect x='10' y='0' width='1' height='11' fill='#333'/><defs><linearGradient id='ag' x1='0' y1='0' x2='1' y2='1'><stop offset='0' stop-color='#5a6cff'/><stop offset='1' stop-color='#2436d0'/></linearGradient></defs><rect x='1' y='1' width='9' height='9' fill='url(#ag)'/><path d='M2.2,9.2 L5.5,1.8 L8.8,9.2 M3.6,6.6 H7.4' stroke='#c8f6ff' stroke-width='1.3' fill='none'/></svg>
<div class='t s' style='left:79.0px;top:149px;font-size:11.5px;line-height:11.5px;font-weight:400;color:#000;letter-spacing:0.1px;'>PART_WEIGHT : string(255)</div>
<div class='r' style='left:249px;top:51px;width:196px;height:95px;background:#99bfff;border-left:2px solid #fff;border-top:2px solid #fff;border-right:1px solid #000;border-bottom:1px solid #000'></div>
<div class='r' style='left:443px;top:53px;width:1px;height:92px;background:rgba(40,30,20,0.55)'></div>
<div class='r' style='left:251px;top:144px;width:192px;height:1px;background:rgba(40,30,20,0.55)'></div>
<div class='r' style='left:249px;top:145px;width:196px;height:1px;background:#000'></div>
<div class='r' style='left:251px;top:53px;width:192px;height:40px;background:linear-gradient(180deg,#0053ee 0%,#4a89f3 50%,#92bbfb 100%)'></div>
<div class='r' style='left:251px;top:93px;width:192px;height:1px;background:#333'></div>
<div class='r' style='left:251px;top:138px;width:192px;height:1px;background:#333'></div>
<div class='t' style='left:313.29px;top:59px;font-size:9.5px;line-height:9.5px;font-weight:400;color:#343438;letter-spacing:0px;transform:scaleX(1.2090);transform-origin:0 0;'>&lt;&lt;Base Table&gt;&gt;</div>
<svg class='r' style='left:321px;top:76px;' width='9' height='12' viewBox='0 0 9 12'><rect x='0.5' y='0.5' width='8' height='11' fill='#19d6d6' stroke='#333'/><rect x='1' y='1' width='7' height='2' fill='#7de8e8'/><rect x='1' y='11' width='8' height='1' fill='#000'/><rect x='2' y='5' width='2' height='1' fill='#000'/><rect x='5' y='5' width='2' height='1' fill='#000'/><rect x='2' y='7' width='2' height='1' fill='#000'/><rect x='5' y='7' width='2' height='1' fill='#000'/><rect x='3' y='9' width='4' height='1' fill='#000'/></svg>
<div class='t' style='left:334.89px;top:76px;font-size:11px;line-height:11px;font-weight:700;color:#000;letter-spacing:0px;transform:scaleX(1.1143);transform-origin:0 0;'>SHIP_VIA</div>
<svg class='r' style='left:262px;top:101px;' width='11' height='11' viewBox='0 0 11 11'><rect x='0' y='0' width='11' height='11' fill='#9a96aa'/><rect x='0' y='10' width='11' height='1' fill='#111'/><rect x='10' y='0' width='1' height='11' fill='#333'/><defs><linearGradient id='ag' x1='0' y1='0' x2='1' y2='1'><stop offset='0' stop-color='#5a6cff'/><stop offset='1' stop-color='#2436d0'/></linearGradient></defs><rect x='1' y='1' width='9' height='9' fill='url(#ag)'/><path d='M2.2,9.2 L5.5,1.8 L8.8,9.2 M3.6,6.6 H7.4' stroke='#c8f6ff' stroke-width='1.3' fill='none'/></svg>
<div class='t s' style='left:279.0px;top:101px;font-size:11.5px;line-height:11.5px;font-weight:400;color:#000;letter-spacing:0.2px;'>SHIPPER_ID : short</div>
<svg class='r' style='left:262px;top:117px;' width='11' height='11' viewBox='0 0 11 11'><rect x='0' y='0' width='11' height='11' fill='#9a96aa'/><rect x='0' y='10' width='11' height='1' fill='#111'/><rect x='10' y='0' width='1' height='11' fill='#333'/><defs><linearGradient id='ag' x1='0' y1='0' x2='1' y2='1'><stop offset='0' stop-color='#5a6cff'/><stop offset='1' stop-color='#2436d0'/></linearGradient></defs><rect x='1' y='1' width='9' height='9' fill='url(#ag)'/><path d='M2.2,9.2 L5.5,1.8 L8.8,9.2 M3.6,6.6 H7.4' stroke='#c8f6ff' stroke-width='1.3' fill='none'/></svg>
<div class='t s' style='left:279.0px;top:117px;font-size:11.5px;line-height:11.5px;font-weight:400;color:#000;letter-spacing:0.125px;'>SHIPPER_NAME : string(30)</div>
<div class='r' style='left:249px;top:158px;width:183px;height:127px;background:#99bfff;border-left:2px solid #fff;border-top:2px solid #fff;border-right:1px solid #000;border-bottom:1px solid #000'></div>
<div class='r' style='left:430px;top:160px;width:1px;height:124px;background:rgba(40,30,20,0.55)'></div>
<div class='r' style='left:251px;top:283px;width:179px;height:1px;background:rgba(40,30,20,0.55)'></div>
<div class='r' style='left:249px;top:284px;width:183px;height:1px;background:#000'></div>
<div class='r' style='left:251px;top:160px;width:179px;height:40px;background:linear-gradient(180deg,#0053ee 0%,#4a89f3 50%,#92bbfb 100%)'></div>
<div class='r' style='left:251px;top:200px;width:179px;height:1px;background:#333'></div>
<div class='r' style='left:251px;top:277px;width:179px;height:1px;background:#333'></div>
<div class='t' style='left:306.28px;top:166px;font-size:9.5px;line-height:9.5px;font-weight:400;color:#343438;letter-spacing:0px;transform:scaleX(1.2179);transform-origin:0 0;'>&lt;&lt;Base Table&gt;&gt;</div>
<svg class='r' style='left:289px;top:183px;' width='9' height='12' viewBox='0 0 9 12'><rect x='0.5' y='0.5' width='8' height='11' fill='#19d6d6' stroke='#333'/><rect x='1' y='1' width='7' height='2' fill='#7de8e8'/><rect x='1' y='11' width='8' height='1' fill='#000'/><rect x='2' y='5' width='2' height='1' fill='#000'/><rect x='5' y='5' width='2' height='1' fill='#000'/><rect x='2' y='7' width='2' height='1' fill='#000'/><rect x='5' y='7' width='2' height='1' fill='#000'/><rect x='3' y='9' width='4' height='1' fill='#000'/></svg>
<div class='t' style='left:302.91px;top:183px;font-size:11px;line-height:11px;font-weight:700;color:#000;letter-spacing:0px;transform:scaleX(1.0865);transform-origin:0 0;'>SUPPLIER_PARTS</div>
<svg class='r' style='left:262px;top:208px;' width='11' height='11' viewBox='0 0 11 11'><rect x='0' y='0' width='11' height='11' fill='#9a96aa'/><rect x='0' y='10' width='11' height='1' fill='#111'/><rect x='10' y='0' width='1' height='11' fill='#333'/><defs><linearGradient id='ag' x1='0' y1='0' x2='1' y2='1'><stop offset='0' stop-color='#5a6cff'/><stop offset='1' stop-color='#2436d0'/></linearGradient></defs><rect x='1' y='1' width='9' height='9' fill='url(#ag)'/><path d='M2.2,9.2 L5.5,1.8 L8.8,9.2 M3.6,6.6 H7.4' stroke='#c8f6ff' stroke-width='1.3' fill='none'/></svg>
<div class='t s' style='left:279.0px;top:208px;font-size:11.5px;line-height:11.5px;font-weight:400;color:#000;letter-spacing:0.222px;'>SUPPLIER_ID : string(10)</div>
<svg class='r' style='left:262px;top:224px;' width='11' height='11' viewBox='0 0 11 11'><rect x='0' y='0' width='11' height='11' fill='#9a96aa'/><rect x='0' y='10' width='11' height='1' fill='#111'/><rect x='10' y='0' width='1' height='11' fill='#333'/><defs><linearGradient id='ag' x1='0' y1='0' x2='1' y2='1'><stop offset='0' stop-color='#5a6cff'/><stop offset='1' stop-color='#2436d0'/></linearGradient></defs><rect x='1' y='1' width='9' height='9' fill='url(#ag)'/><path d='M2.2,9.2 L5.5,1.8 L8.8,9.2 M3.6,6.6 H7.4' stroke='#c8f6ff' stroke-width='1.3' fill='none'/></svg>
<div class='t s' style='left:279.0px;top:224px;font-size:11.5px;line-height:11.5px;font-weight:400;color:#000;letter-spacing:0.279px;'>PART_ID : string(50)</div>
<svg class='r' style='left:262px;top:240px;' width='11' height='11' viewBox='0 0 11 11'><rect x='0' y='0' width='11' height='11' fill='#9a96aa'/><rect x='0' y='10' width='11' height='1' fill='#111'/><rect x='10' y='0' width='1' height='11' fill='#333'/><defs><linearGradient id='ag' x1='0' y1='0' x2='1' y2='1'><stop offset='0' stop-color='#5a6cff'/><stop offset='1' stop-color='#2436d0'/></linearGradient></defs><rect x='1' y='1' width='9' height='9' fill='url(#ag)'/><path d='M2.2,9.2 L5.5,1.8 L8.8,9.2 M3.6,6.6 H7.4' stroke='#c8f6ff' stroke-width='1.3' fill='none'/></svg>
<div class='t s' style='left:279.0px;top:240px;font-size:11.5px;line-height:11.5px;font-weight:400;color:#000;letter-spacing:0.36px;'>QUANTITY : short</div>
<svg class='r' style='left:262px;top:256px;' width='11' height='11' viewBox='0 0 11 11'><rect x='0' y='0' width='11' height='11' fill='#9a96aa'/><rect x='0' y='10' width='11' height='1' fill='#111'/><rect x='10' y='0' width='1' height='11' fill='#333'/><defs><linearGradient id='ag' x1='0' y1='0' x2='1' y2='1'><stop offset='0' stop-color='#5a6cff'/><stop offset='1' stop-color='#2436d0'/></linearGradient></defs><rect x='1' y='1' width='9' height='9' fill='url(#ag)'/><path d='M2.2,9.2 L5.5,1.8 L8.8,9.2 M3.6,6.6 H7.4' stroke='#c8f6ff' stroke-width='1.3' fill='none'/></svg>
<div class='t s' style='left:279.0px;top:256px;font-size:11.5px;line-height:11.5px;font-weight:400;color:#000;letter-spacing:0.218px;'>SHIPPER_ID : short</div>
<div class='r' style='left:537px;top:61px;width:202px;height:191px;background:#fdc462;border-left:2px solid #fff;border-top:2px solid #fff;border-right:1px solid #000;border-bottom:1px solid #000'></div>
<div class='r' style='left:737px;top:63px;width:1px;height:188px;background:rgba(40,30,20,0.55)'></div>
<div class='r' style='left:539px;top:250px;width:198px;height:1px;background:rgba(40,30,20,0.55)'></div>
<div class='r' style='left:537px;top:251px;width:202px;height:1px;background:#000'></div>
<div class='r' style='left:539px;top:63px;width:198px;height:40px;background:linear-gradient(180deg,#ff9700 0%,#fdb13a 50%,#fdc65e 100%)'></div>
<div class='r' style='left:539px;top:103px;width:198px;height:1px;background:#333'></div>
<div class='r' style='left:539px;top:244px;width:198px;height:1px;background:#333'></div>
<div class='t' style='left:604.29px;top:69px;font-size:9.5px;line-height:9.5px;font-weight:400;color:#343438;letter-spacing:0px;transform:scaleX(1.2149);transform-origin:0 0;'>&lt;&lt;Base Table&gt;&gt;</div>
<svg class='r' style='left:600px;top:86px;' width='9' height='12' viewBox='0 0 9 12'><rect x='0.5' y='0.5' width='8' height='11' fill='#f2efe8' stroke='#333'/><rect x='1' y='1' width='7' height='2' fill='#ddd'/><rect x='1' y='11' width='8' height='1' fill='#000'/><rect x='2' y='5' width='2' height='1' fill='#000'/><rect x='5' y='5' width='2' height='1' fill='#000'/><rect x='2' y='7' width='2' height='1' fill='#000'/><rect x='5' y='7' width='2' height='1' fill='#000'/><rect x='3' y='9' width='4' height='1' fill='#000'/></svg>
<div class='t' style='left:614.78px;top:86px;font-size:11px;line-height:11px;font-weight:700;color:#000;letter-spacing:0px;transform:scaleX(1.2175);transform-origin:0 0;'>SupplierInfo</div>
<svg class='r' style='left:550px;top:111px;' width='11' height='11' viewBox='0 0 11 11'><rect x='0' y='0' width='11' height='11' fill='#9a96aa'/><rect x='0' y='10' width='11' height='1' fill='#111'/><rect x='10' y='0' width='1' height='11' fill='#333'/><defs><linearGradient id='ag' x1='0' y1='0' x2='1' y2='1'><stop offset='0' stop-color='#5a6cff'/><stop offset='1' stop-color='#2436d0'/></linearGradient></defs><rect x='1' y='1' width='9' height='9' fill='url(#ag)'/><path d='M2.2,9.2 L5.5,1.8 L8.8,9.2 M3.6,6.6 H7.4' stroke='#c8f6ff' stroke-width='1.3' fill='none'/></svg>
<div class='t s' style='left:567.0px;top:111px;font-size:11.5px;line-height:11.5px;font-weight:400;color:#000;letter-spacing:0.217px;'>SUPPLIER_ID : string(10)</div>
<svg class='r' style='left:550px;top:127px;' width='11' height='11' viewBox='0 0 11 11'><rect x='0' y='0' width='11' height='11' fill='#9a96aa'/><rect x='0' y='10' width='11' height='1' fill='#111'/><rect x='10' y='0' width='1' height='11' fill='#333'/><defs><linearGradient id='ag' x1='0' y1='0' x2='1' y2='1'><stop offset='0' stop-color='#5a6cff'/><stop offset='1' stop-color='#2436d0'/></linearGradient></defs><rect x='1' y='1' width='9' height='9' fill='url(#ag)'/><path d='M2.2,9.2 L5.5,1.8 L8.8,9.2 M3.6,6.6 H7.4' stroke='#c8f6ff' stroke-width='1.3' fill='none'/></svg>
<div class='t s' style='left:567.0px;top:127px;font-size:11.5px;line-height:11.5px;font-weight:400;color:#000;letter-spacing:0.258px;'>PART_ID : string(50)</div>
<svg class='r' style='left:550px;top:143px;' width='11' height='11' viewBox='0 0 11 11'><rect x='0' y='0' width='11' height='11' fill='#9a96aa'/><rect x='0' y='10' width='11' height='1' fill='#111'/><rect x='10' y='0' width='1' height='11' fill='#333'/><defs><linearGradient id='ag' x1='0' y1='0' x2='1' y2='1'><stop offset='0' stop-color='#5a6cff'/><stop offset='1' stop-color='#2436d0'/></linearGradient></defs><rect x='1' y='1' width='9' height='9' fill='url(#ag)'/><path d='M2.2,9.2 L5.5,1.8 L8.8,9.2 M3.6,6.6 H7.4' stroke='#c8f6ff' stroke-width='1.3' fill='none'/></svg>
<div class='t s' style='left:567.0px;top:143px;font-size:11.5px;line-height:11.5px;font-weight:400;color:#000;letter-spacing:0.353px;'>QUANTITY : short</div>
<svg class='r' style='left:550px;top:159px;' width='11' height='11' viewBox='0 0 11 11'><rect x='0' y='0' width='11' height='11' fill='#9a96aa'/><rect x='0' y='10' width='11' height='1' fill='#111'/><rect x='10' y='0' width='1' height='11' fill='#333'/><defs><linearGradient id='ag' x1='0' y1='0' x2='1' y2='1'><stop offset='0' stop-color='#5a6cff'/><stop offset='1' stop-color='#2436d0'/></linearGradient></defs><rect x='1' y='1' width='9' height='9' fill='url(#ag)'/><path d='M2.2,9.2 L5.5,1.8 L8.8,9.2 M3.6,6.6 H7.4' stroke='#c8f6ff' stroke-width='1.3' fill='none'/></svg>
<div class='t s' style='left:567.0px;top:159px;font-size:11.5px;line-height:11.5px;font-weight:400;color:#000;letter-spacing:0.194px;'>SHIPPER_ID : short</div>
<svg class='r' style='left:550px;top:175px;' width='11' height='11' viewBox='0 0 11 11'><rect x='0' y='0' width='11' height='11' fill='#9a96aa'/><rect x='0' y='10' width='11' height='1' fill='#111'/><rect x='10' y='0' width='1' height='11' fill='#333'/><defs><linearGradient id='ag' x1='0' y1='0' x2='1' y2='1'><stop offset='0' stop-color='#5a6cff'/><stop offset='1' stop-color='#2436d0'/></linearGradient></defs><rect x='1' y='1' width='9' height='9' fill='url(#ag)'/><path d='M2.2,9.2 L5.5,1.8 L8.8,9.2 M3.6,6.6 H7.4' stroke='#c8f6ff' stroke-width='1.3' fill='none'/></svg>
<div class='t s' style='left:567.0px;top:175px;font-size:11.5px;line-height:11.5px;font-weight:400;color:#000;letter-spacing:0.108px;'>SUPPLIER_NAME : string(30)</div>
<svg class='r' style='left:550px;top:191px;' width='11' height='11' viewBox='0 0 11 11'><rect x='0' y='0' width='11' height='11' fill='#9a96aa'/><rect x='0' y='10' width='11' height='1' fill='#111'/><rect x='10' y='0' width='1' height='11' fill='#333'/><defs><linearGradient id='ag' x1='0' y1='0' x2='1' y2='1'><stop offset='0' stop-color='#5a6cff'/><stop offset='1' stop-color='#2436d0'/></linearGradient></defs><rect x='1' y='1' width='9' height='9' fill='url(#ag)'/><path d='M2.2,9.2 L5.5,1.8 L8.8,9.2 M3.6,6.6 H7.4' stroke='#c8f6ff' stroke-width='1.3' fill='none'/></svg>
<div class='t s' style='left:567.0px;top:191px;font-size:11.5px;line-height:11.5px;font-weight:400;color:#000;letter-spacing:0.095px;'>SUPPLIER_STATUS : short</div>
<svg class='r' style='left:550px;top:207px;' width='11' height='11' viewBox='0 0 11 11'><rect x='0' y='0' width='11' height='11' fill='#9a96aa'/><rect x='0' y='10' width='11' height='1' fill='#111'/><rect x='10' y='0' width='1' height='11' fill='#333'/><defs><linearGradient id='ag' x1='0' y1='0' x2='1' y2='1'><stop offset='0' stop-color='#5a6cff'/><stop offset='1' stop-color='#2436d0'/></linearGradient></defs><rect x='1' y='1' width='9' height='9' fill='url(#ag)'/><path d='M2.2,9.2 L5.5,1.8 L8.8,9.2 M3.6,6.6 H7.4' stroke='#c8f6ff' stroke-width='1.3' fill='none'/></svg>
<div class='t s' style='left:567.0px;top:207px;font-size:11.5px;line-height:11.5px;font-weight:400;color:#000;letter-spacing:0.144px;'>SUPPLIER_CITY : string(30)</div>
<svg class='r' style='left:550px;top:223px;' width='11' height='11' viewBox='0 0 11 11'><rect x='0' y='0' width='11' height='11' fill='#9a96aa'/><rect x='0' y='10' width='11' height='1' fill='#111'/><rect x='10' y='0' width='1' height='11' fill='#333'/><defs><linearGradient id='ag' x1='0' y1='0' x2='1' y2='1'><stop offset='0' stop-color='#5a6cff'/><stop offset='1' stop-color='#2436d0'/></linearGradient></defs><rect x='1' y='1' width='9' height='9' fill='url(#ag)'/><path d='M2.2,9.2 L5.5,1.8 L8.8,9.2 M3.6,6.6 H7.4' stroke='#c8f6ff' stroke-width='1.3' fill='none'/></svg>
<div class='t s' style='left:567.0px;top:223px;font-size:11.5px;line-height:11.5px;font-weight:400;color:#000;letter-spacing:0.112px;'>SUPPLIER_STATE : string(2)</div>
<div class='r' style='left:517px;top:41px;width:379px;height:267px;overflow:hidden'>
<div class='r' style='left:236px;top:23px;width:200px;height:218px;background:#fdc462;border-left:2px solid #fff;border-top:2px solid #fff;border-bottom:2px solid #000'></div>
<div class='r' style='left:236px;top:239px;width:200px;height:2px;background:#000'></div>
<div class='r' style='left:238px;top:25px;width:198px;height:40px;background:linear-gradient(180deg,#ff9700 0%,#fdb13a 50%,#fdc65e 100%)'></div>
<div class='r' style='left:238px;top:65px;width:198px;height:1px;background:#333'></div>
<div class='r' style='left:238px;top:93px;width:198px;height:1px;background:#333'></div>
<div class='r' style='left:238px;top:233px;width:198px;height:1px;background:#333'></div>
<div class='t' style='left:317.3px;top:31px;font-size:9.5px;line-height:9.5px;font-weight:400;color:#343438;letter-spacing:0px;transform:scaleX(1.2031);transform-origin:0 0;'>&lt;&lt;Procedure&gt;&gt;</div>
<svg class='r' style='left:309px;top:47px;' width='11.5' height='13' viewBox='0 0 11.5 13'><rect x='0.5' y='0.5' width='11' height='12' fill='#f4f0e6' stroke='#444'/><rect x='11' y='1' width='1' height='12' fill='#000'/><rect x='1' y='12' width='11' height='1' fill='#000'/><text x='2' y='10' font-family='Liberation Serif' font-style='italic' font-size='10' fill='#000'>f</text><text x='6.5' y='11' font-family='Liberation Sans' font-size='5' fill='#000'>x</text></svg>
<div class='t' style='left:325.84px;top:48px;font-size:11px;line-height:11px;font-weight:700;color:#000;letter-spacing:0px;transform:scaleX(1.1594);transform-origin:0 0;'>partsByColor</div>
<svg class='r' style='left:250px;top:72px;' width='11' height='14' viewBox='0 0 11 14'><path d='M3,1 Q1,4.5 3,8 M8,1 Q10,4.5 8,8' stroke='#222' fill='none' stroke-width='0.9'/><path d='M3.5,2.5 L7.5,6.5 M7.5,2.5 L3.5,6.5' stroke='#222' stroke-width='0.9'/><path d='M4.5,7.5 V11.5 H9 M7.5,10 L9.5,11.5 L7.5,13' stroke='#222' fill='none' stroke-width='0.9'/></svg>
<div class='t s' style='left:266.0px;top:73px;font-size:11.5px;line-height:11.5px;font-weight:400;color:#000;letter-spacing:0.8px;'>colorIn : string</div>
<div class='r' style='left:243px;top:99px;width:200px;height:126px;background:#fdc462;border-left:2px solid #fff;border-top:2px solid #fff;border-bottom:2px solid #000'></div>
<div class='r' style='left:243px;top:223px;width:200px;height:2px;background:#000'></div>
<div class='r' style='left:245px;top:101px;width:198px;height:40px;background:linear-gradient(180deg,#ff9700 0%,#fdb13a 50%,#fdc65e 100%)'></div>
<div class='r' style='left:245px;top:141px;width:198px;height:1px;background:#333'></div>
<div class='r' style='left:245px;top:217px;width:198px;height:1px;background:#333'></div>
<div class='t' style='left:298.27px;top:107px;font-size:9.5px;line-height:9.5px;font-weight:400;color:#343438;letter-spacing:0px;transform:scaleX(1.2340);transform-origin:0 0;'>&lt;&lt;Procedure Result&gt;&gt;</div>
<svg class='r' style='left:283px;top:123px;' width='9' height='12' viewBox='0 0 9 12'><rect x='0.5' y='0.5' width='8' height='11' fill='#f2efe8' stroke='#333'/><rect x='1' y='1' width='7' height='2' fill='#ccc'/><rect x='1' y='11' width='8' height='1' fill='#000'/><rect x='2' y='5' width='2' height='1' fill='#000'/><rect x='5' y='5' width='2' height='1' fill='#000'/><rect x='2' y='7' width='2' height='1' fill='#000'/><rect x='5' y='7' width='2' height='1' fill='#000'/><rect x='3' y='9' width='4' height='1' fill='#000'/></svg>
<div class='t' style='left:297.71px;top:124px;font-size:11px;line-height:11px;font-weight:700;color:#000;letter-spacing:0px;transform:scaleX(1.2909);transform-origin:0 0;'>NewProcedureResult</div>
<svg class='r' style='left:256px;top:148px;' width='11' height='11' viewBox='0 0 11 11'><rect x='0' y='0' width='11' height='11' fill='#9a96aa'/><rect x='0' y='10' width='11' height='1' fill='#111'/><rect x='10' y='0' width='1' height='11' fill='#333'/><defs><linearGradient id='ag' x1='0' y1='0' x2='1' y2='1'><stop offset='0' stop-color='#5a6cff'/><stop offset='1' stop-color='#2436d0'/></linearGradient></defs><rect x='1' y='1' width='9' height='9' fill='url(#ag)'/><path d='M2.2,9.2 L5.5,1.8 L8.8,9.2 M3.6,6.6 H7.4' stroke='#c8f6ff' stroke-width='1.3' fill='none'/></svg>
<div class='t s' style='left:272.0px;top:148px;font-size:11.5px;line-height:11.5px;font-weight:400;color:#000;letter-spacing:0.222px;'>PART_ID : string(4)</div>
<svg class='r' style='left:256px;top:164px;' width='11' height='11' viewBox='0 0 11 11'><rect x='0' y='0' width='11' height='11' fill='#9a96aa'/><rect x='0' y='10' width='11' height='1' fill='#111'/><rect x='10' y='0' width='1' height='11' fill='#333'/><defs><linearGradient id='ag' x1='0' y1='0' x2='1' y2='1'><stop offset='0' stop-color='#5a6cff'/><stop offset='1' stop-color='#2436d0'/></linearGradient></defs><rect x='1' y='1' width='9' height='9' fill='url(#ag)'/><path d='M2.2,9.2 L5.5,1.8 L8.8,9.2 M3.6,6.6 H7.4' stroke='#c8f6ff' stroke-width='1.3' fill='none'/></svg>
<div class='t s' style='left:272.0px;top:164px;font-size:11.5px;line-height:11.5px;font-weight:400;color:#000;letter-spacing:0.173px;'>PART_NAME : string(255)</div>
<svg class='r' style='left:256px;top:180px;' width='11' height='11' viewBox='0 0 11 11'><rect x='0' y='0' width='11' height='11' fill='#9a96aa'/><rect x='0' y='10' width='11' height='1' fill='#111'/><rect x='10' y='0' width='1' height='11' fill='#333'/><defs><linearGradient id='ag' x1='0' y1='0' x2='1' y2='1'><stop offset='0' stop-color='#5a6cff'/><stop offset='1' stop-color='#2436d0'/></linearGradient></defs><rect x='1' y='1' width='9' height='9' fill='url(#ag)'/><path d='M2.2,9.2 L5.5,1.8 L8.8,9.2 M3.6,6.6 H7.4' stroke='#c8f6ff' stroke-width='1.3' fill='none'/></svg>
<div class='t s' style='left:272.0px;top:180px;font-size:11.5px;line-height:11.5px;font-weight:400;color:#000;letter-spacing:0.155px;'>PART_COLOR : string(30)</div>
<svg class='r' style='left:256px;top:196px;' width='11' height='11' viewBox='0 0 11 11'><rect x='0' y='0' width='11' height='11' fill='#9a96aa'/><rect x='0' y='10' width='11' height='1' fill='#111'/><rect x='10' y='0' width='1' height='11' fill='#333'/><defs><linearGradient id='ag' x1='0' y1='0' x2='1' y2='1'><stop offset='0' stop-color='#5a6cff'/><stop offset='1' stop-color='#2436d0'/></linearGradient></defs><rect x='1' y='1' width='9' height='9' fill='url(#ag)'/><path d='M2.2,9.2 L5.5,1.8 L8.8,9.2 M3.6,6.6 H7.4' stroke='#c8f6ff' stroke-width='1.3' fill='none'/></svg>
<div class='t s' style='left:272.0px;top:196px;font-size:11.5px;line-height:11.5px;font-weight:400;color:#000;letter-spacing:0.1px;'>PART_WEIGHT : string(255)</div>
</div>
<svg class='r' style='left:0;top:0' width='925' height='759'><defs><linearGradient id='btg' x1='0' y1='0' x2='0' y2='1'><stop offset='0' stop-color='#e3edf8'/><stop offset='0.45' stop-color='#b4cfee'/><stop offset='1' stop-color='#78a9dd'/></linearGradient></defs><path d='M2.5,395 V368 Q2.5,361.5 9,361.5 H90 C94,361.5 96,362.5 99,365 L121,385 C124,388 128,392.5 133,392.5 V395 Z' fill='url(#btg)'/><path d='M2.5,758.5 V368 Q2.5,361.5 9,361.5 H918 Q924.5,361.5 924.5,368 V758.5 Z' fill='none' stroke='#a99d8a'/><path d='M90,361.5 C94,361.5 96,362.5 99,365 L121,385 C124,388 128,392.5 133,392.5 H924.5' fill='none' stroke='#a99d8a'/></svg>
<div class='r' style='left:3px;top:393px;width:921px;height:365px;border:2px solid #4a90d9;border-color:#81b3e6;background:#ece9e3'></div>
<div class='r' style='left:5px;top:395px;width:917px;height:361px;border:1px solid #f5eee5;border-right-color:#f5eee5;border-bottom-color:#f5eee5;'></div>
<svg class='r' style='left:9px;top:370px;' width='10' height='14' viewBox='0 0 10 14'><defs><linearGradient id='cyl' x1='0' y1='0' x2='1' y2='0'><stop offset='0' stop-color='#e89a20'/><stop offset='0.35' stop-color='#fff2b0'/><stop offset='1' stop-color='#e08a10'/></linearGradient></defs><rect x='0.5' y='1' width='9' height='12.5' rx='2' fill='url(#cyl)' stroke='#a86a10'/><ellipse cx='5' cy='2.8' rx='4' ry='1.8' fill='#fff6c8' stroke='#a86a10' stroke-width='0.8'/></svg>
<div class='t s' style='left:25.0px;top:372px;font-size:11.5px;line-height:11.5px;font-weight:400;color:#000;letter-spacing:0.75px;'>Parts.vdb</div>
<svg class='r' style='left:88px;top:372px;' width='10' height='10' viewBox='0 0 10 10'><g shape-rendering='crispEdges'><rect x='1' y='1' width='1' height='1' fill='#fff'/><rect x='2' y='1' width='1' height='1' fill='#fff'/><rect x='7' y='1' width='1' height='1' fill='#fff'/><rect x='8' y='1' width='1' height='1' fill='#fff'/><rect x='1' y='2' width='1' height='1' fill='#fff'/><rect x='2' y='2' width='1' height='1' fill='#fff'/><rect x='3' y='2' width='1' height='1' fill='#fff'/><rect x='6' y='2' width='1' height='1' fill='#fff'/><rect x='7' y='2' width='1' height='1' fill='#fff'/><rect x='8' y='2' width='1' height='1' fill='#fff'/><rect x='2' y='3' width='1' height='1' fill='#fff'/><rect x='3' y='3' width='1' height='1' fill='#fff'/><rect x='4' y='3' width='1' height='1' fill='#fff'/><rect x='5' y='3' width='1' height='1' fill='#fff'/><rect x='6' y='3' width='1' height='1' fill='#fff'/><rect x='7' y='3' width='1' height='1' fill='#fff'/><rect x='3' y='4' width='1' height='1' fill='#fff'/><rect x='4' y='4' width='1' height='1' fill='#fff'/><rect x='5' y='4' width='1' height='1' fill='#fff'/><rect x='6' y='4' width='1' height='1' fill='#fff'/><rect x='3' y='5' width='1' height='1' fill='#fff'/><rect x='4' y='5' width='1' height='1' fill='#fff'/><rect x='5' y='5' width='1' height='1' fill='#fff'/><rect x='6' y='5' width='1' height='1' fill='#fff'/><rect x='2' y='6' width='1' height='1' fill='#fff'/><rect x='3' y='6' width='1' height='1' fill='#fff'/><rect x='4' y='6' width='1' height='1' fill='#fff'/><rect x='5' y='6' width='1' height='1' fill='#fff'/><rect x='6' y='6' width='1' height='1' fill='#fff'/><rect x='7' y='6' width='1' height='1' fill='#fff'/><rect x='1' y='7' width='1' height='1' fill='#fff'/><rect x='2' y='7' width='1' height='1' fill='#fff'/><rect x='3' y='7' width='1' height='1' fill='#fff'/><rect x='6' y='7' width='1' height='1' fill='#fff'/><rect x='7' y='7' width='1' height='1' fill='#fff'/><rect x='8' y='7' width='1' height='1' fill='#fff'/><rect x='1' y='8' width='1' height='1' fill='#fff'/><rect x='2' y='8' width='1' height='1' fill='#fff'/><rect x='7' y='8' width='1' height='1' fill='#fff'/><rect x='8' y='8' width='1' height='1' fill='#fff'/><rect x='0' y='0' width='1' height='1' fill='#000'/><rect x='1' y='0' width='1' height='1' fill='#000'/><rect x='2' y='0' width='1' height='1' fill='#000'/><rect x='7' y='0' width='1' height='1' fill='#000'/><rect x='8' y='0' width='1' height='1' fill='#000'/><rect x='9' y='0' width='1' height='1' fill='#000'/><rect x='0' y='1' width='1' height='1' fill='#000'/><rect x='3' y='1' width='1' height='1' fill='#000'/><rect x='6' y='1' width='1' height='1' fill='#000'/><rect x='9' y='1' width='1' height='1' fill='#000'/><rect x='0' y='2' width='1' height='1' fill='#000'/><rect x='4' y='2' width='1' height='1' fill='#000'/><rect x='5' y='2' width='1' height='1' fill='#000'/><rect x='9' y='2' width='1' height='1' fill='#000'/><rect x='1' y='3' width='1' height='1' fill='#000'/><rect x='8' y='3' width='1' height='1' fill='#000'/><rect x='2' y='4' width='1' height='1' fill='#000'/><rect x='7' y='4' width='1' height='1' fill='#000'/><rect x='2' y='5' width='1' height='1' fill='#000'/><rect x='7' y='5' width='1' height='1' fill='#000'/><rect x='1' y='6' width='1' height='1' fill='#000'/><rect x='8' y='6' width='1' height='1' fill='#000'/><rect x='0' y='7' width='1' height='1' fill='#000'/><rect x='4' y='7' width='1' height='1' fill='#000'/><rect x='5' y='7' width='1' height='1' fill='#000'/><rect x='9' y='7' width='1' height='1' fill='#000'/><rect x='0' y='8' width='1' height='1' fill='#000'/><rect x='3' y='8' width='1' height='1' fill='#000'/><rect x='6' y='8' width='1' height='1' fill='#000'/><rect x='9' y='8' width='1' height='1' fill='#000'/><rect x='0' y='9' width='1' height='1' fill='#000'/><rect x='1' y='9' width='1' height='1' fill='#000'/><rect x='2' y='9' width='1' height='1' fill='#000'/><rect x='7' y='9' width='1' height='1' fill='#000'/><rect x='8' y='9' width='1' height='1' fill='#000'/><rect x='9' y='9' width='1' height='1' fill='#000'/></g></svg>
<div class='r' style='left:11px;top:408px;width:906px;height:69px;border:1px solid #fbfaf8;border-radius:4px'></div>
<div class='r' style='left:10px;top:407px;width:906px;height:69px;border:1px solid #a99d8a;border-radius:4px'></div>
<div class='r' style='left:15px;top:401px;width:65px;height:9px;background:#ece9e3'></div>
<div class='t s' style='left:15.0px;top:401px;font-size:11.5px;line-height:11.5px;font-weight:400;color:#000;letter-spacing:0.6px;'>Description</div>
<div class='r' style='left:17px;top:418px;width:876px;height:52px;background:#fff'></div>
<div class='r' style='left:895px;top:418px;width:15px;height:52px;border:1px solid #9d9180;border-radius:5px;background:#fbfaf8'></div>
<div class='r' style='left:896px;top:433px;width:13px;height:22px;background:linear-gradient(90deg,#7eb4ea 0,#72abe6 50%,#5e9ddf 50%,#65a2e2 100%);border-top:1px solid #8a8070;border-bottom:1px solid #8a8070'></div>
<svg class='r' style='left:895px;top:418px;' width='15' height='52' viewBox='0 0 15 52'><path d='M4,10 L7.5,6.5 L11,10' stroke='#a69a85' fill='none' stroke-width='1.2'/><path d='M4,42 L7.5,45.5 L11,42' stroke='#a69a85' fill='none' stroke-width='1.2'/></svg>
<div class='r' style='left:11px;top:490px;width:906px;height:115px;border:1px solid #fbfaf8;border-radius:4px'></div>
<div class='r' style='left:10px;top:489px;width:906px;height:115px;border:1px solid #a99d8a;border-radius:4px'></div>
<div class='r' style='left:15px;top:483px;width:40px;height:9px;background:#ece9e3'></div>
<div class='t s' style='left:15.0px;top:483px;font-size:11.5px;line-height:11.5px;font-weight:400;color:#000;letter-spacing:0.2px;'>Models</div>
<div class='r' style='left:17px;top:500px;width:831px;height:98px;border:1px solid #a99d8a;background:#fff'></div>
<div class='r' style='left:18px;top:501px;width:829px;height:20px;background:linear-gradient(180deg,#fbfaf9 0%,#f7f5f2 70%,#eeebe6 75%,#efece8 100%)'></div>
<div class='r' style='left:18px;top:521px;width:829px;height:1px;background:#b6ab99'></div>
<div class='r' style='left:150px;top:505px;width:1px;height:12px;background:linear-gradient(180deg,#ebe8e3,#d5cfc5 50%,#ebe8e3)'></div>
<div class='r' style='left:236px;top:505px;width:1px;height:12px;background:linear-gradient(180deg,#ebe8e3,#d5cfc5 50%,#ebe8e3)'></div>
<div class='r' style='left:345px;top:505px;width:1px;height:12px;background:linear-gradient(180deg,#ebe8e3,#d5cfc5 50%,#ebe8e3)'></div>
<div class='r' style='left:416px;top:505px;width:1px;height:12px;background:linear-gradient(180deg,#ebe8e3,#d5cfc5 50%,#ebe8e3)'></div>
<div class='r' style='left:521px;top:505px;width:1px;height:12px;background:linear-gradient(180deg,#ebe8e3,#d5cfc5 50%,#ebe8e3)'></div>
<div class='r' style='left:606px;top:505px;width:1px;height:12px;background:linear-gradient(180deg,#ebe8e3,#d5cfc5 50%,#ebe8e3)'></div>
<div class='r' style='left:693px;top:505px;width:1px;height:12px;background:linear-gradient(180deg,#ebe8e3,#d5cfc5 50%,#ebe8e3)'></div>
<div class='r' style='left:845px;top:505px;width:1px;height:12px;background:linear-gradient(180deg,#ebe8e3,#d5cfc5 50%,#ebe8e3)'></div>
<div class='t s' style='left:23.0px;top:506px;font-size:11.5px;line-height:11.5px;font-weight:400;color:#000;letter-spacing:0.5px;'>Model</div>
<div class='t s' style='left:157.0px;top:506px;font-size:11.5px;line-height:11.5px;font-weight:400;color:#000;letter-spacing:0.667px;'>Path</div>
<div class='t s' style='left:251.0px;top:506px;font-size:11.5px;line-height:11.5px;font-weight:400;color:#000;letter-spacing:0.433px;'>Synchronized?</div>
<div class='t s' style='left:361.0px;top:506px;font-size:11.5px;line-height:11.5px;font-weight:400;color:#000;letter-spacing:0.343px;'>Visible?</div>
<div class='t s' style='left:423.0px;top:506px;font-size:11.5px;line-height:11.5px;font-weight:400;color:#000;letter-spacing:0.66px;'>Source Name</div>
<div class='t s' style='left:530.0px;top:506px;font-size:11.5px;line-height:11.5px;font-weight:400;color:#000;letter-spacing:0.489px;'>Translator</div>
<div class='t s' style='left:612.0px;top:506px;font-size:11.5px;line-height:11.5px;font-weight:400;color:#000;letter-spacing:0.088px;'>JNDI Name</div>
<div class='t s' style='left:699.0px;top:506px;font-size:11.5px;line-height:11.5px;font-weight:400;color:#000;letter-spacing:0.73px;'>Description</div>
<div class='r' style='left:18px;top:541px;width:829px;height:19px;background:#ebebeb'></div>
<div class='r' style='left:151px;top:522px;width:1px;height:57px;background:repeating-linear-gradient(180deg,#000 0,#000 1px,transparent 1px,transparent 2px)'></div>
<div class='r' style='left:237px;top:522px;width:1px;height:57px;background:repeating-linear-gradient(180deg,#000 0,#000 1px,transparent 1px,transparent 2px)'></div>
<div class='r' style='left:346px;top:522px;width:1px;height:57px;background:repeating-linear-gradient(180deg,#000 0,#000 1px,transparent 1px,transparent 2px)'></div>
<div class='r' style='left:417px;top:522px;width:1px;height:57px;background:repeating-linear-gradient(180deg,#000 0,#000 1px,transparent 1px,transparent 2px)'></div>
<div class='r' style='left:522px;top:522px;width:1px;height:57px;background:repeating-linear-gradient(180deg,#000 0,#000 1px,transparent 1px,transparent 2px)'></div>
<div class='r' style='left:607px;top:522px;width:1px;height:57px;background:repeating-linear-gradient(180deg,#000 0,#000 1px,transparent 1px,transparent 2px)'></div>
<div class='r' style='left:694px;top:522px;width:1px;height:57px;background:repeating-linear-gradient(180deg,#000 0,#000 1px,transparent 1px,transparent 2px)'></div>
<div class='r' style='left:18px;top:522px;width:829px;height:1px;background:repeating-linear-gradient(90deg,#000 0,#000 1px,transparent 1px,transparent 2px)'></div>
<div class='r' style='left:18px;top:540px;width:829px;height:1px;background:repeating-linear-gradient(90deg,#000 0,#000 1px,transparent 1px,transparent 2px)'></div>
<div class='r' style='left:18px;top:522px;width:1px;height:19px;background:repeating-linear-gradient(180deg,#000 0,#000 1px,transparent 1px,transparent 2px)'></div>
<div class='r' style='left:846px;top:522px;width:1px;height:19px;background:repeating-linear-gradient(180deg,#000 0,#000 1px,transparent 1px,transparent 2px)'></div>
<svg class='r' style='left:20px;top:523px;' width='17' height='17' viewBox='0 0 17 17'><path d='M1.5,4 L7.5,1.5 L13.5,4 V11 L7.5,13.5 L1.5,11 Z' fill='#c4d2ee' stroke='#5572cc' stroke-width='1'/><path d='M2,4 L7.5,1.8 L13,4 L7.5,6.3 Z' fill='#dde6f6'/><path d='M7.5,6.3 L13,4 V11 L7.5,13.2 Z' fill='#d8c8f0'/><path d='M1.5,4 L7.5,6.5 L13.5,4 M7.5,6.5 V13.5' fill='none' stroke='#5572cc' stroke-width='0.9'/><rect x='9' y='7.5' width='5.5' height='7.5' rx='1.2' fill='#2a5ae8' stroke='#1a2ea8' stroke-width='1'/><rect x='10.5' y='9.5' width='2' height='4' fill='#6aa0ff' opacity='0.6'/><path d='M9,9 Q11.75,10.3 14.5,9' fill='none' stroke='#1a2ea8' stroke-width='0.8'/></svg>
<div class='t s' style='left:39.0px;top:526px;font-size:11.5px;line-height:11.5px;font-weight:400;color:#000;letter-spacing:0.7px;'>PartsSourceA.xmi</div>
<div class='t s' style='left:158.0px;top:526px;font-size:11.5px;line-height:11.5px;font-weight:400;color:#000;letter-spacing:0.608px;'>/PartsProject</div>
<svg class='r' style='left:287px;top:523px;' width='16' height='15' viewBox='0 0 16 15'><rect x='2.8' y='3.8' width='10.4' height='10.4' fill='#fff' stroke='#1a58d8' stroke-width='1.6'/><path d='M1,9 L5.5,12 L14.5,1.5' stroke='#000' stroke-width='2.2' fill='none' stroke-linejoin='miter'/></svg>
<svg class='r' style='left:377px;top:523px;' width='16' height='15' viewBox='0 0 16 15'><rect x='2.8' y='3.8' width='10.4' height='10.4' fill='#fff' stroke='#1a58d8' stroke-width='1.6'/><path d='M1,9 L5.5,12 L14.5,1.5' stroke='#000' stroke-width='2.2' fill='none' stroke-linejoin='miter'/></svg>
<div class='t s' style='left:423.0px;top:526px;font-size:11.5px;line-height:11.5px;font-weight:400;color:#000;letter-spacing:0.618px;'>PartsSourceA</div>
<div class='t s' style='left:530.0px;top:526px;font-size:11.5px;line-height:11.5px;font-weight:400;color:#000;letter-spacing:0.75px;'>db2</div>
<div class='t s' style='left:613.0px;top:526px;font-size:11.5px;line-height:11.5px;font-weight:400;color:#000;letter-spacing:0.609px;'>PartsSourceA</div>
<svg class='r' style='left:20px;top:542px;' width='17' height='17' viewBox='0 0 17 17'><path d='M1.5,4 L7.5,1.5 L13.5,4 V11 L7.5,13.5 L1.5,11 Z' fill='#c4d2ee' stroke='#5572cc' stroke-width='1'/><path d='M2,4 L7.5,1.8 L13,4 L7.5,6.3 Z' fill='#dde6f6'/><path d='M7.5,6.3 L13,4 V11 L7.5,13.2 Z' fill='#d8c8f0'/><path d='M1.5,4 L7.5,6.5 L13.5,4 M7.5,6.5 V13.5' fill='none' stroke='#5572cc' stroke-width='0.9'/><rect x='9' y='7.5' width='5.5' height='7.5' rx='1.2' fill='#2a5ae8' stroke='#1a2ea8' stroke-width='1'/><rect x='10.5' y='9.5' width='2' height='4' fill='#6aa0ff' opacity='0.6'/><path d='M9,9 Q11.75,10.3 14.5,9' fill='none' stroke='#1a2ea8' stroke-width='0.8'/></svg>
<div class='t s' style='left:39.0px;top:545px;font-size:11.5px;line-height:11.5px;font-weight:400;color:#000;letter-spacing:0.733px;'>PartsSourceB.xmi</div>
<div class='t s' style='left:158.0px;top:545px;font-size:11.5px;line-height:11.5px;font-weight:400;color:#000;letter-spacing:0.608px;'>/PartsProject</div>
<svg class='r' style='left:287px;top:542px;' width='16' height='15' viewBox='0 0 16 15'><rect x='2.8' y='3.8' width='10.4' height='10.4' fill='#fff' stroke='#1a58d8' stroke-width='1.6'/><path d='M1,9 L5.5,12 L14.5,1.5' stroke='#000' stroke-width='2.2' fill='none' stroke-linejoin='miter'/></svg>
<svg class='r' style='left:377px;top:542px;' width='16' height='15' viewBox='0 0 16 15'><rect x='2.8' y='3.8' width='10.4' height='10.4' fill='#fff' stroke='#1a58d8' stroke-width='1.6'/><path d='M1,9 L5.5,12 L14.5,1.5' stroke='#000' stroke-width='2.2' fill='none' stroke-linejoin='miter'/></svg>
<div class='t s' style='left:423.0px;top:545px;font-size:11.5px;line-height:11.5px;font-weight:400;color:#000;letter-spacing:0.709px;'>PartsSourceB</div>
<div class='t s' style='left:530.0px;top:545px;font-size:11.5px;line-height:11.5px;font-weight:400;color:#000;letter-spacing:0.812px;'>sqlserver</div>
<div class='t s' style='left:613.0px;top:545px;font-size:11.5px;line-height:11.5px;font-weight:400;color:#000;letter-spacing:0.7px;'>PartsSourceB</div>
<svg class='r' style='left:20px;top:561px;' width='17' height='17' viewBox='0 0 17 17'><path d='M1.5,4 L7.5,1.5 L13.5,4 V11 L7.5,13.5 L1.5,11 Z' fill='#e8c020' stroke='#a07808' stroke-width='1'/><path d='M2,4 L7.5,1.8 L13,4 L7.5,6.3 Z' fill='#f2d040'/><path d='M7.5,6.3 L13,4 V11 L7.5,13.2 Z' fill='#d8a818'/><path d='M1.5,4 L7.5,6.5 L13.5,4 M7.5,6.5 V13.5' fill='none' stroke='#a07808' stroke-width='0.9'/><rect x='9' y='7.5' width='5.5' height='7.5' rx='1.2' fill='#f6cf70' stroke='#c08a10' stroke-width='1'/><rect x='10.5' y='9.5' width='2' height='4' fill='#fff0b8' opacity='0.6'/><path d='M9,9 Q11.75,10.3 14.5,9' fill='none' stroke='#c08a10' stroke-width='0.8'/></svg>
<div class='t s' style='left:39.0px;top:564px;font-size:11.5px;line-height:11.5px;font-weight:400;color:#000;letter-spacing:0.667px;'>PartsVirtual.xmi</div>
<div class='t s' style='left:158.0px;top:564px;font-size:11.5px;line-height:11.5px;font-weight:400;color:#000;letter-spacing:0.608px;'>/PartsProject</div>
<svg class='r' style='left:287px;top:561px;' width='16' height='15' viewBox='0 0 16 15'><rect x='2.8' y='3.8' width='10.4' height='10.4' fill='#fff' stroke='#1a58d8' stroke-width='1.6'/><path d='M1,9 L5.5,12 L14.5,1.5' stroke='#000' stroke-width='2.2' fill='none' stroke-linejoin='miter'/></svg>
<svg class='r' style='left:377px;top:561px;' width='16' height='15' viewBox='0 0 16 15'><rect x='2.8' y='3.8' width='10.4' height='10.4' fill='#fff' stroke='#1a58d8' stroke-width='1.6'/><path d='M1,9 L5.5,12 L14.5,1.5' stroke='#000' stroke-width='2.2' fill='none' stroke-linejoin='miter'/></svg>
<div class='r' style='left:854px;top:522px;width:55px;height:23px;border:1px solid #9d9180;border-radius:4px;background:linear-gradient(180deg,#ffffff 0%,#fbfaf8 50%,#eeebe6 100%)'></div>
<div class='t s' style='left:865.0px;top:528px;font-size:11.5px;line-height:11.5px;font-weight:400;color:#000;letter-spacing:0.6px;'>Add...</div>
<div class='r' style='left:854px;top:552px;width:55px;height:23px;border:1px solid #c3b8a8;border-radius:4px;background:linear-gradient(180deg,#f2f0ec 0%,#ebe8e3 50%,#e2ded7 100%)'></div>
<div class='t s' style='left:859.0px;top:558px;font-size:11.5px;line-height:11.5px;font-weight:400;color:#b0a799;letter-spacing:0.4px;'>Remove</div>
<div class='r' style='left:11px;top:618px;width:513px;height:103px;border:1px solid #fbfaf8;border-radius:4px'></div>
<div class='r' style='left:10px;top:617px;width:513px;height:103px;border:1px solid #a99d8a;border-radius:4px'></div>
<div class='r' style='left:15px;top:611px;width:63px;height:9px;background:#ece9e3'></div>
<div class='t s' style='left:15.0px;top:611px;font-size:11.5px;line-height:11.5px;font-weight:400;color:#000;letter-spacing:0.5px;'>Other Files</div>
<div class='r' style='left:17px;top:628px;width:438px;height:86px;border:1px solid #a99d8a;background:#fff'></div>
<div class='r' style='left:18px;top:629px;width:436px;height:20px;background:linear-gradient(180deg,#fbfaf9 0%,#f7f5f2 70%,#eeebe6 75%,#efece8 100%)'></div>
<div class='r' style='left:18px;top:649px;width:436px;height:1px;background:#b6ab99'></div>
<div class='r' style='left:62px;top:633px;width:1px;height:12px;background:linear-gradient(180deg,#ebe8e3,#d5cfc5 50%,#ebe8e3)'></div>
<div class='r' style='left:115px;top:633px;width:1px;height:12px;background:linear-gradient(180deg,#ebe8e3,#d5cfc5 50%,#ebe8e3)'></div>
<div class='r' style='left:224px;top:633px;width:1px;height:12px;background:linear-gradient(180deg,#ebe8e3,#d5cfc5 50%,#ebe8e3)'></div>
<div class='r' style='left:452px;top:633px;width:1px;height:12px;background:linear-gradient(180deg,#ebe8e3,#d5cfc5 50%,#ebe8e3)'></div>
<div class='t s' style='left:22.0px;top:634px;font-size:11.5px;line-height:11.5px;font-weight:400;color:#000;letter-spacing:0.333px;'>File</div>
<div class='t s' style='left:68.0px;top:634px;font-size:11.5px;line-height:11.5px;font-weight:400;color:#000;letter-spacing:0.667px;'>Path</div>
<div class='t s' style='left:130.0px;top:634px;font-size:11.5px;line-height:11.5px;font-weight:400;color:#000;letter-spacing:0.417px;'>Synchronized?</div>
<div class='t s' style='left:230.0px;top:634px;font-size:11.5px;line-height:11.5px;font-weight:400;color:#000;letter-spacing:0.7px;'>Description</div>
<div class='r' style='left:461px;top:644px;width:56px;height:23px;border:1px solid #9d9180;border-radius:4px;background:linear-gradient(180deg,#ffffff 0%,#fbfaf8 50%,#eeebe6 100%)'></div>
<div class='t s' style='left:472.0px;top:650px;font-size:11.5px;line-height:11.5px;font-weight:400;color:#000;letter-spacing:0.6px;'>Add...</div>
<div class='r' style='left:461px;top:674px;width:56px;height:23px;border:1px solid #c3b8a8;border-radius:4px;background:linear-gradient(180deg,#f2f0ec 0%,#ebe8e3 50%,#e2ded7 100%)'></div>
<div class='t s' style='left:466.0px;top:680px;font-size:11.5px;line-height:11.5px;font-weight:400;color:#b0a799;letter-spacing:0.4px;'>Remove</div>
<div class='r' style='left:530px;top:618px;width:387px;height:103px;border:1px solid #fbfaf8;border-radius:4px'></div>
<div class='r' style='left:529px;top:617px;width:387px;height:103px;border:1px solid #a99d8a;border-radius:4px'></div>
<div class='r' style='left:533px;top:611px;width:90px;height:9px;background:#ece9e3'></div>
<div class='t s' style='left:534.0px;top:611px;font-size:11.5px;line-height:11.5px;font-weight:400;color:#000;letter-spacing:0.308px;'>VDB Data Roles</div>
<div class='r' style='left:536px;top:628px;width:312px;height:86px;border:1px solid #a99d8a;background:#fff'></div>
<div class='r' style='left:537px;top:629px;width:310px;height:20px;background:linear-gradient(180deg,#fbfaf9 0%,#f7f5f2 70%,#eeebe6 75%,#efece8 100%)'></div>
<div class='r' style='left:537px;top:649px;width:310px;height:1px;background:#b6ab99'></div>
<div class='r' style='left:617px;top:633px;width:1px;height:12px;background:linear-gradient(180deg,#ebe8e3,#d5cfc5 50%,#ebe8e3)'></div>
<div class='r' style='left:845px;top:633px;width:1px;height:12px;background:linear-gradient(180deg,#ebe8e3,#d5cfc5 50%,#ebe8e3)'></div>
<div class='t s' style='left:542.0px;top:634px;font-size:11.5px;line-height:11.5px;font-weight:400;color:#000;letter-spacing:0.312px;'>Data Role</div>
<div class='t s' style='left:623.0px;top:634px;font-size:11.5px;line-height:11.5px;font-weight:400;color:#000;letter-spacing:0.7px;'>Description</div>
<div class='r' style='left:854px;top:629px;width:55px;height:23px;border:1px solid #9d9180;border-radius:4px;background:linear-gradient(180deg,#ffffff 0%,#fbfaf8 50%,#eeebe6 100%)'></div>
<div class='t s' style='left:864.0px;top:635px;font-size:11.5px;line-height:11.5px;font-weight:400;color:#000;letter-spacing:0.6px;'>New...</div>
<div class='r' style='left:854px;top:659px;width:55px;height:23px;border:1px solid #c3b8a8;border-radius:4px;background:linear-gradient(180deg,#f2f0ec 0%,#ebe8e3 50%,#e2ded7 100%)'></div>
<div class='t s' style='left:865.0px;top:665px;font-size:11.5px;line-height:11.5px;font-weight:400;color:#b0a799;letter-spacing:0.667px;'>Edit...</div>
<div class='r' style='left:854px;top:689px;width:55px;height:23px;border:1px solid #c3b8a8;border-radius:4px;background:linear-gradient(180deg,#f2f0ec 0%,#ebe8e3 50%,#e2ded7 100%)'></div>
<div class='t s' style='left:859.0px;top:695px;font-size:11.5px;line-height:11.5px;font-weight:400;color:#b0a799;letter-spacing:0.4px;'>Remove</div>
<div class='r' style='left:219px;top:727px;width:95px;height:23px;border:1px solid #c3b8a8;border-radius:4px;background:linear-gradient(180deg,#f2f0ec 0%,#ebe8e3 50%,#e2ded7 100%)'></div>
<div class='t s' style='left:224.0px;top:733px;font-size:11.5px;line-height:11.5px;font-weight:400;color:#b0a799;letter-spacing:0.5px;'>Synchronize All</div>
</body></html>
